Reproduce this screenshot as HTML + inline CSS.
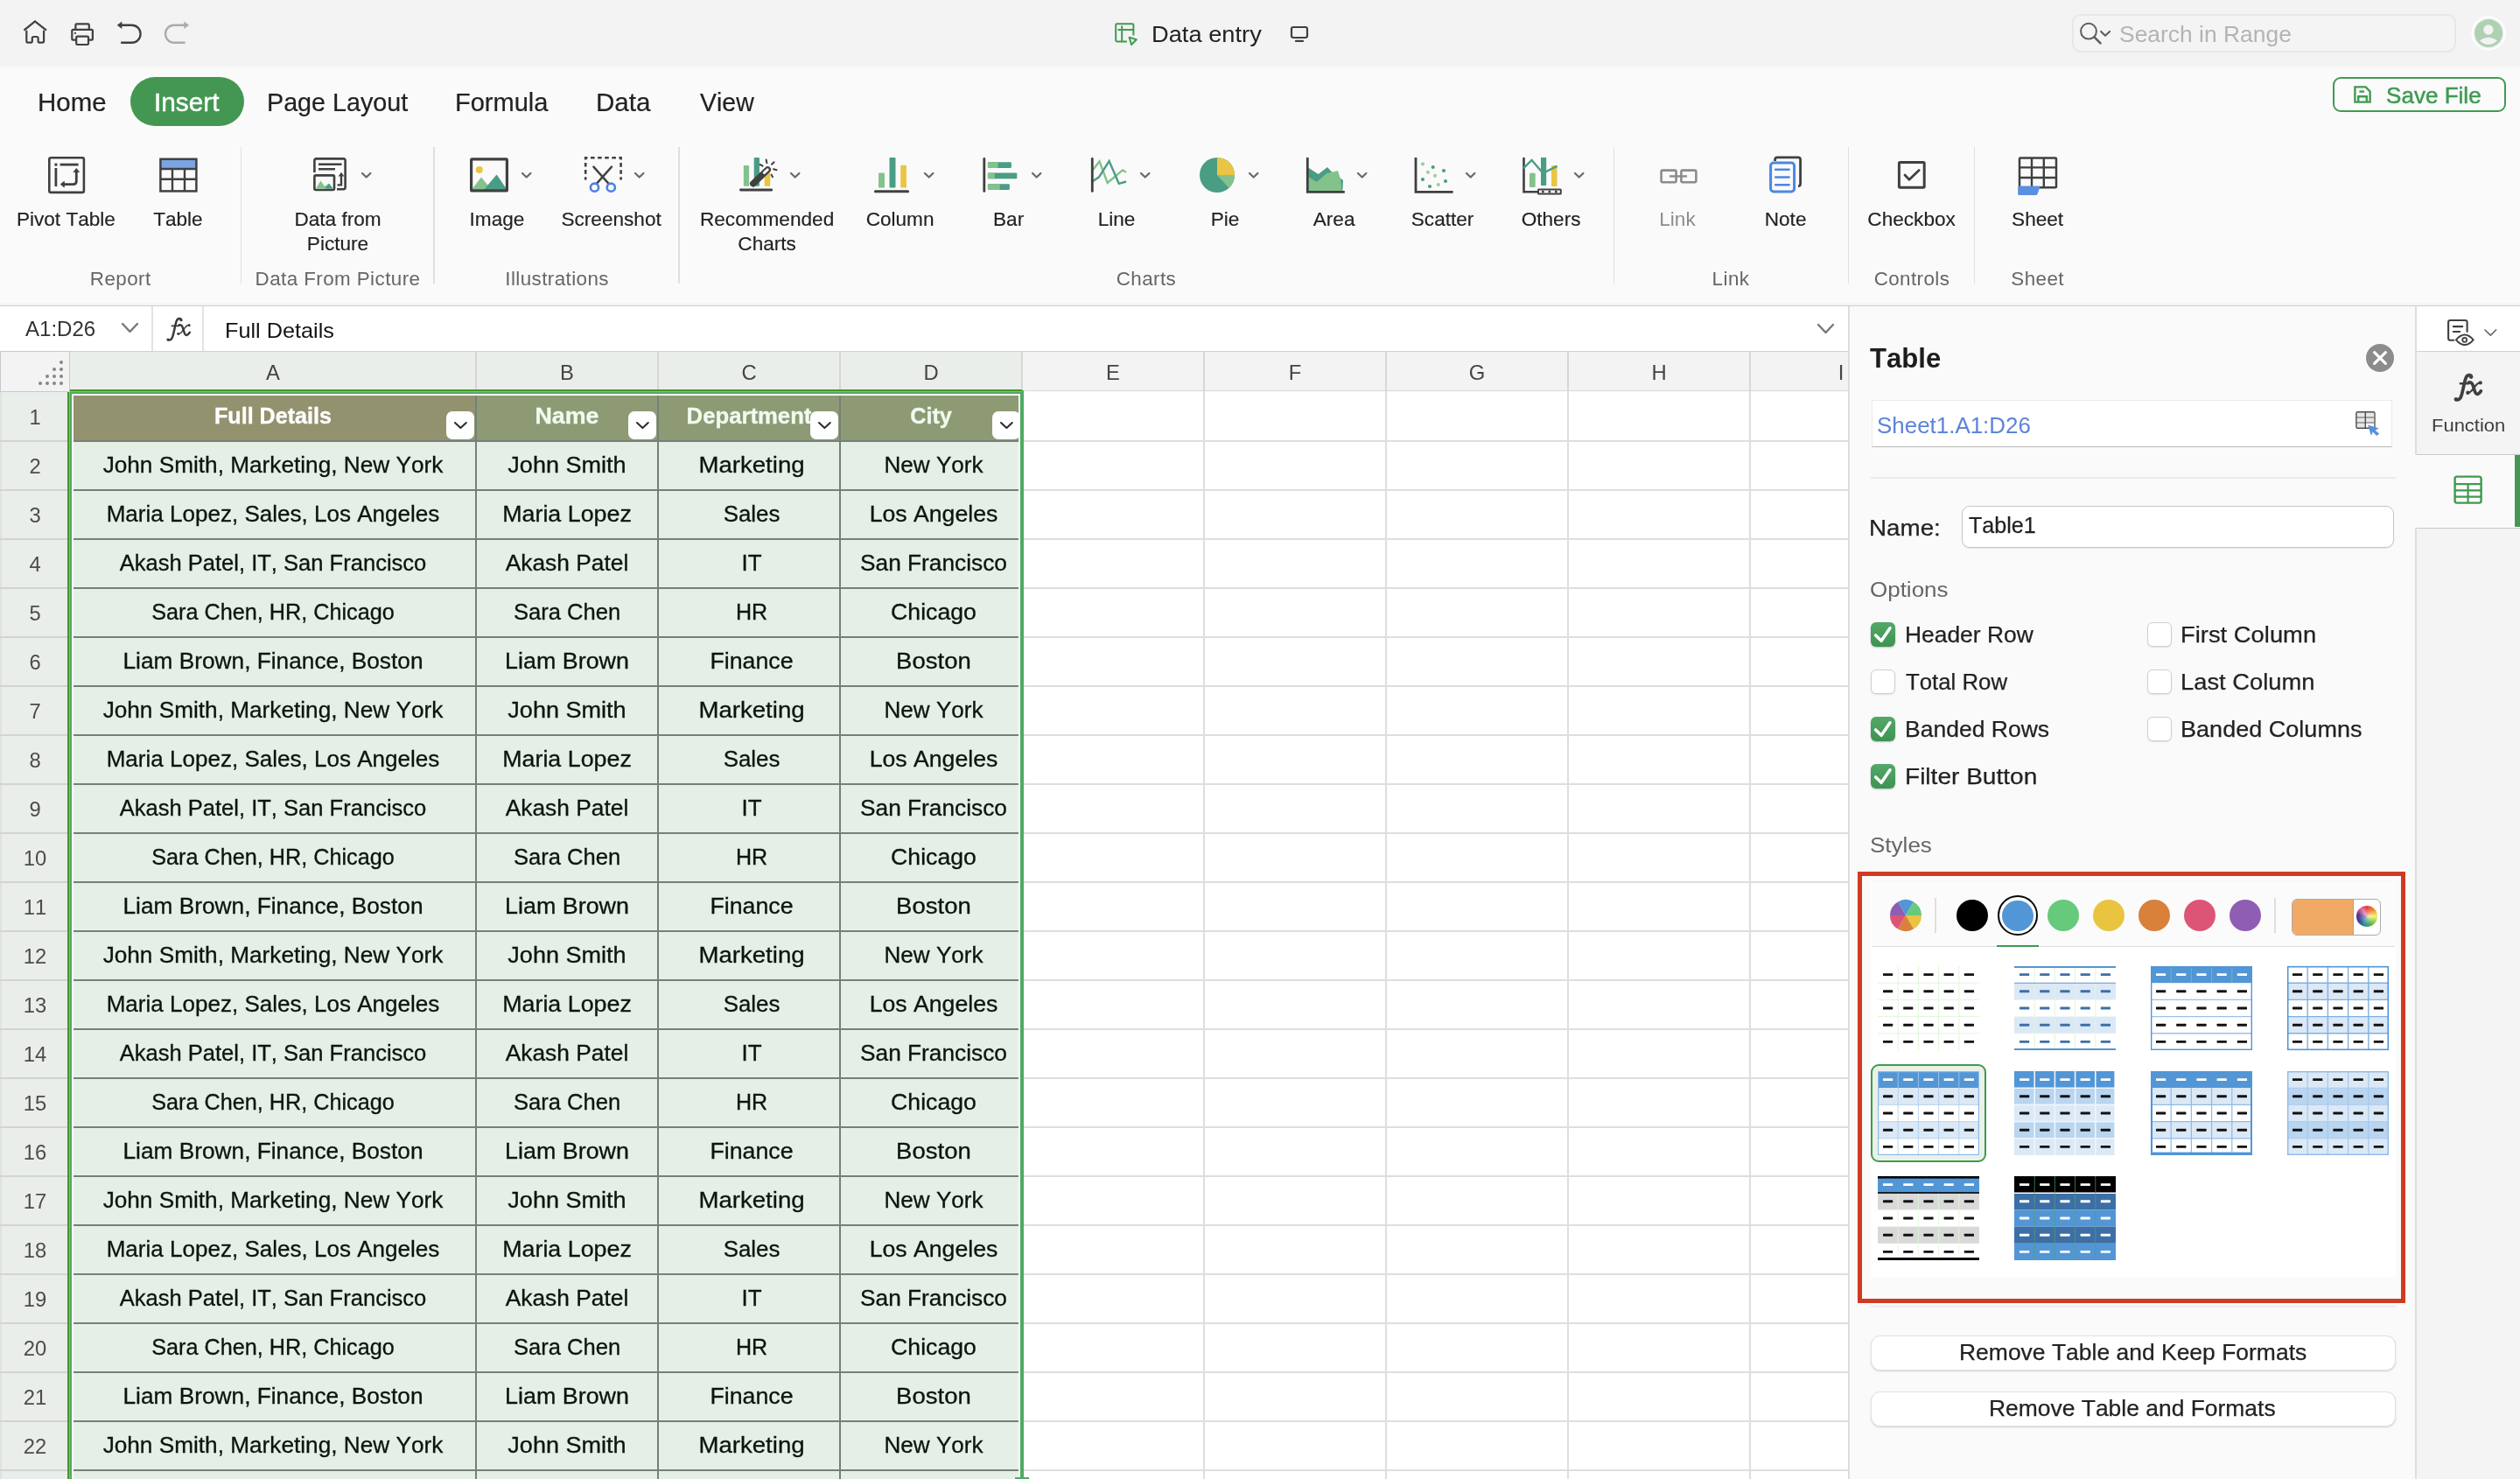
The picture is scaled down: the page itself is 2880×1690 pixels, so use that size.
<!DOCTYPE html>
<html><head><meta charset="utf-8"><title>Data entry</title>
<style>
html,body{margin:0;padding:0;background:#fff;}
body{width:2880px;height:1690px;overflow:hidden;font-family:"Liberation Sans",sans-serif;}
#app{position:relative;width:2880px;height:1690px;overflow:hidden;background:#fff;will-change:transform;}
.t{position:absolute;white-space:nowrap;line-height:1;font-kerning:none;}
svg{overflow:visible;}

</style></head>
<body>
<div id="app">
<div style="position:absolute;left:0px;top:0px;width:2880px;height:76px;background:#f3f3f3;"></div>
<svg style="position:absolute;left:25px;top:22px;" width="32" height="32" viewBox="0 0 32 32" fill="none"><path d="M2.4 12.7 L15 2.4 L28 12.7" stroke="#404040" stroke-width="2.3" stroke-linejoin="miter"/><path d="M5.3 13.6 V25 Q5.3 26.6 6.9 26.6 H10.3 Q11.8 26.6 11.8 25.1 V21.6 Q11.8 20 13.4 20 H17 Q18.6 20 18.6 21.6 V25.1 Q18.6 26.6 20.1 26.6 H23.5 Q25.1 26.6 25.1 25 V13.6" stroke="#404040" stroke-width="2.2" stroke-linecap="round" stroke-linejoin="round"/></svg>
<svg style="position:absolute;left:79px;top:24px;" width="32" height="32" viewBox="0 0 32 32" fill="none"><path d="M7.4 9.8 V4.6 Q7.4 3.3 8.7 3.3 H21.5 Q22.8 3.3 22.8 4.6 V9.8" stroke="#404040" stroke-width="2.2" stroke-linejoin="round"/><path d="M7.8 21.6 H4.7 Q3.3 21.6 3.3 20.2 V11.3 Q3.3 9.9 4.7 9.9 H25.5 Q26.9 9.9 26.9 11.3 V20.2 Q26.9 21.6 25.5 21.6 H22.4" stroke="#404040" stroke-width="2.2" stroke-linejoin="round"/><rect x="8.2" y="17.6" width="13.8" height="9.4" rx="1.2" stroke="#404040" stroke-width="2.2"/><circle cx="6.9" cy="13.9" r="1.15" fill="#404040"/></svg>
<svg style="position:absolute;left:132px;top:22px;" width="34" height="32" viewBox="0 0 34 32" fill="none"><path d="M6 6.75 H18.6 A10 10 0 0 1 18.6 26.75 H6.2" stroke="#404040" stroke-width="2.3"/><path d="M7.4 2.5 L1.8 6.75 L7.4 11 Z" fill="#404040"/></svg>
<svg style="position:absolute;left:186px;top:22px;" width="34" height="32" viewBox="0 0 34 32" fill="none"><path d="M25.8 6.75 H13 A10 10 0 0 0 13 26.75 H25.7" stroke="#ababab" stroke-width="2.3"/><path d="M24.4 2.5 L30 6.75 L24.4 11 Z" fill="#ababab"/></svg>
<svg style="position:absolute;left:1272px;top:24px;" width="30" height="30" viewBox="0 0 30 30" fill="none"><path d="M23.4 16.5 V4.6 Q23.4 3.2 22 3.2 H4.6 Q3.2 3.2 3.2 4.6 V22 Q3.2 23.4 4.6 23.4 H16" stroke="#3f9a50" stroke-width="2"/><path d="M10.2 5.5 V23.4 M5.5 10 H23.4" stroke="#3f9a50" stroke-width="2"/><path d="M18.6 18.6 L26.8 21.2 L21 27 Z" stroke="#3f9a50" stroke-width="2" stroke-linejoin="round"/></svg>
<div class="t" style="top:25.89px;font-size:26px;color:#222;left:1316.46px;transform:scaleX(1.0487);transform-origin:left center;">Data entry</div>
<svg style="position:absolute;left:1473px;top:28px;" width="24" height="22" viewBox="0 0 24 22" fill="none"><rect x="3" y="3" width="18" height="12" rx="2.2" stroke="#404040" stroke-width="2.2"/><path d="M8 18.9 H16" stroke="#404040" stroke-width="2.2" stroke-linecap="round"/></svg>
<div style="position:absolute;left:2368.3px;top:16.1px;width:439.2px;height:43.9px;box-sizing:border-box;background:#f4f4f4;border:2px solid #e7e7e7;border-radius:10px;"></div>
<svg style="position:absolute;left:2374px;top:24.2px;" width="42" height="30" viewBox="0 0 42 30" fill="none"><circle cx="13" cy="11.7" r="8.9" stroke="#5e5e5e" stroke-width="2"/><path d="M19.5 18.3 L26.5 25.3" stroke="#5e5e5e" stroke-width="2.6" stroke-linecap="round"/><path d="M27.1 11.9 L32 16.7 L37.1 11.9" stroke="#5e5e5e" stroke-width="2.1" stroke-linecap="round" stroke-linejoin="round"/></svg>
<div class="t" style="top:25.99px;font-size:26px;color:#b4b4b4;left:2421.80px;transform:scaleX(1.0165);transform-origin:left center;">Search in Range</div>
<svg style="position:absolute;left:2824px;top:18px;" width="40" height="40" viewBox="0 0 40 40" fill="none"><circle cx="20.1" cy="19.9" r="18.7" stroke="#fefefe" stroke-width="2"/><circle cx="20.1" cy="19.9" r="16" fill="#aed0b3"/><circle cx="19.9" cy="16" r="5.7" fill="#f3f3f3"/><path d="M10 28.5 Q20 21 29.9 28.5 Q20 37.7 10 28.5 Z" fill="#f3f3f3"/></svg>
<div style="position:absolute;left:0px;top:76px;width:2880px;height:272px;background:#fafafa;"></div>
<div style="position:absolute;left:0px;top:345px;width:2880px;height:4px;background:linear-gradient(#fafafa,#f1f1f1);"></div>
<div style="position:absolute;left:0px;top:348.8px;width:2880px;height:1.5px;background:#d0d0d0;"></div>
<div class="t" style="top:103.09px;font-size:28.6px;color:#222;left:42.68px;transform:scaleX(1.0306);transform-origin:left center;-webkit-text-stroke:0.2px #222;">Home</div>
<div style="position:absolute;left:149px;top:88px;width:130px;height:56px;background:#449752;border-radius:28px;"></div>
<div class="t" style="top:103.09px;font-size:28.6px;color:#fff;left:175.95px;transform:scaleX(1.0411);transform-origin:left center;-webkit-text-stroke:0.45px #fff;">Insert</div>
<div class="t" style="top:103.09px;font-size:28.6px;color:#222;left:304.64px;transform:scaleX(1.0041);transform-origin:left center;-webkit-text-stroke:0.2px #222;">Page Layout</div>
<div class="t" style="top:103.09px;font-size:28.6px;color:#222;left:519.62px;transform:scaleX(1.0142);transform-origin:left center;-webkit-text-stroke:0.2px #222;">Formula</div>
<div class="t" style="top:103.09px;font-size:28.6px;color:#222;left:680.58px;transform:scaleX(1.0333);transform-origin:left center;-webkit-text-stroke:0.2px #222;">Data</div>
<div class="t" style="top:103.09px;font-size:28.6px;color:#222;left:799.87px;transform:scaleX(0.9962);transform-origin:left center;-webkit-text-stroke:0.2px #222;">View</div>
<div style="position:absolute;left:2666px;top:88px;width:198px;height:40px;box-sizing:border-box;border:2.4px solid #3f9b52;border-radius:9px;background:#fbfbfb;"></div>
<svg style="position:absolute;left:2688px;top:96px;" width="24" height="24" viewBox="0 0 24 24" fill="none"><path d="M3.4 3.4 H15.6 L20.6 8.4 V20.6 H3.4 Z" stroke="#3f9b52" stroke-width="2.4" stroke-linejoin="miter"/><path d="M7.2 20.6 V14.2 H16.8 V20.6" stroke="#3f9b52" stroke-width="2.4"/><path d="M8.4 8.6 H14" stroke="#3f9b52" stroke-width="2.4"/></svg>
<div class="t" style="top:96.81px;font-size:25.5px;color:#3f9b52;left:2726.82px;transform:scaleX(1.0221);transform-origin:left center;-webkit-text-stroke:0.5px #3f9b52;">Save File</div>
<div style="position:absolute;left:274.7px;top:168px;width:1.6px;height:156px;background:#e0e0e0;"></div>
<div style="position:absolute;left:495.2px;top:168px;width:1.6px;height:156px;background:#e0e0e0;"></div>
<div style="position:absolute;left:775.2px;top:168px;width:1.6px;height:156px;background:#e0e0e0;"></div>
<div style="position:absolute;left:1843.8px;top:168px;width:1.6px;height:156px;background:#e0e0e0;"></div>
<div style="position:absolute;left:2111.7px;top:168px;width:1.6px;height:156px;background:#e0e0e0;"></div>
<div style="position:absolute;left:2255.6px;top:168px;width:1.6px;height:156px;background:#e0e0e0;"></div>
<svg style="position:absolute;left:50px;top:174px;" width="52" height="52" viewBox="0 0 52 52" fill="none"><rect x="6.3" y="6.3" width="39.6" height="39.6" rx="2" stroke="#404040" stroke-width="2.6"/><rect x="12.4" y="12.6" width="3" height="3" fill="#404040"/><path d="M18.6 14.1 H39.6" stroke="#404040" stroke-width="2.8"/><path d="M13.9 18 V39" stroke="#404040" stroke-width="2.8"/><path d="M37.3 21 V33 Q37.3 36.6 33.7 36.6 H23" stroke="#404040" stroke-width="2.8"/><path d="M34 22.6 L37.3 18.4 L40.6 22.6 Z" fill="#404040" stroke="#404040" stroke-width="0.8" stroke-linejoin="round"/><path d="M23.4 33.3 L19.2 36.6 L23.4 39.9 Z" fill="#404040" stroke="#404040" stroke-width="0.8" stroke-linejoin="round"/></svg>
<svg style="position:absolute;left:178px;top:176px;" width="52" height="48" viewBox="0 0 52 48" fill="none"><rect x="5.4" y="5.8" width="41" height="10.5" fill="#7ba4e2"/><rect x="5.4" y="5.8" width="41" height="36.6" stroke="#404040" stroke-width="2.5"/><path d="M5.4 17 H46.4 M5.4 28.7 H46.4 M19 17 V42.4 M33 17 V42.4" stroke="#404040" stroke-width="2.4"/></svg>
<svg style="position:absolute;left:354px;top:176px;" width="48" height="46" viewBox="0 0 48 46" fill="none"><path d="M5.4 21 V7.6 Q5.4 5.4 7.6 5.4 H38.4 Q40.6 5.4 40.6 7.6 V38 Q40.6 40.2 38.4 40.2 H31" stroke="#404040" stroke-width="2.6"/><path d="M10 11.7 H36.6 M10 17.2 H29" stroke="#404040" stroke-width="2.4"/><rect x="5.4" y="24.4" width="22.6" height="16.6" rx="1.5" fill="#fafafa" stroke="#404040" stroke-width="2.6"/><path d="M7 39.6 L12.5 30.5 L17 37 L21.5 34 L26.5 39.6 Z" fill="#84c28c"/><path d="M17 39.6 L22 33.6 L26.6 39.6 Z" fill="#4a9d85"/><path d="M36 24 V35.4 H31.6" stroke="#404040" stroke-width="2.4"/><path d="M32.6 25.6 L36 20.8 L39.4 25.6 Z" fill="#404040"/></svg>
<svg style="position:absolute;left:532px;top:176px;" width="54" height="48" viewBox="0 0 54 48" fill="none"><path d="M7 40.8 L18 26.6 L27.5 38 L35.6 24 L47 40.8 Z" fill="#84c28c"/><path d="M21 40.8 L35.6 23.6 L47.4 40.8 Z" fill="#4a9d85"/><circle cx="15.8" cy="17.9" r="4" fill="#eac545"/><rect x="6.6" y="5.9" width="40.8" height="36" rx="1" stroke="#404040" stroke-width="3.2"/></svg>
<svg style="position:absolute;left:664px;top:174px;" width="52" height="52" viewBox="0 0 52 52" fill="none"><path d="M5.2 31.6 V6.2 H45.6 V31.6" stroke="#404040" stroke-width="2.6" stroke-dasharray="4.6 3.5" stroke-dashoffset="1.2"/><path d="M14.4 16.6 L31.4 35.6 M35 16.6 L18 35.6" stroke="#404040" stroke-width="2.4" stroke-linecap="round"/><circle cx="15.5" cy="40.2" r="4.6" fill="#fafafa" stroke="#4b82e0" stroke-width="2.6"/><circle cx="34.3" cy="40.2" r="4.6" fill="#fafafa" stroke="#4b82e0" stroke-width="2.6"/></svg>
<svg style="position:absolute;left:840px;top:174px;" width="60" height="52" viewBox="0 0 60 52" fill="none"><rect x="9.8" y="15" width="6.3" height="23.8" rx="1" fill="#84c28c"/><rect x="21.7" y="6" width="6.3" height="32.8" rx="1" fill="#4a9d85"/><rect x="33.6" y="22.7" width="6.7" height="16.1" rx="1" fill="#eac545"/><path d="M6.4 43 H41.8" stroke="#404040" stroke-width="2.8" stroke-linecap="round"/><path d="M20.7 35.8 L37.3 19.8" stroke="#404040" stroke-width="7.4" stroke-linecap="round"/><path d="M33.4 23.4 L37.2 19.8" stroke="#fafafa" stroke-width="3" stroke-linecap="round"/><path d="M35.6 8.5 L36.4 12.2 M44.6 11.2 L42 13.8 M47.6 20.2 L44 19.2 M41.6 25.6 L43 28.2 M28.6 14 L31.6 15.6" stroke="#404040" stroke-width="2" stroke-linecap="round"/></svg>
<svg style="position:absolute;left:994px;top:174px;" width="52" height="52" viewBox="0 0 52 52" fill="none"><rect x="10" y="23.5" width="7" height="17" rx="1.2" fill="#84c28c"/><rect x="22.5" y="6" width="7" height="34.5" rx="1.2" fill="#4a9d85"/><rect x="35.2" y="14.8" width="6.8" height="25.7" rx="1.2" fill="#eac545"/><path d="M6.4 44.7 H43.6" stroke="#404040" stroke-width="3" stroke-linecap="round"/></svg>
<svg style="position:absolute;left:1118px;top:174px;" width="52" height="52" viewBox="0 0 52 52" fill="none"><path d="M6.8 7.4 V44.4" stroke="#404040" stroke-width="2.8" stroke-linecap="round"/><rect x="10.9" y="11.3" width="27" height="6.6" rx="1.3" fill="#4a9d85"/><rect x="10.9" y="11.3" width="11.7" height="6.6" rx="1" fill="#84c28c"/><rect x="10.9" y="23.5" width="33.4" height="6.7" rx="1.3" fill="#4a9d85"/><rect x="10.9" y="23.5" width="7.9" height="6.7" rx="1" fill="#84c28c"/><rect x="10.9" y="36.2" width="25" height="6.7" rx="1.3" fill="#4a9d85"/><rect x="10.9" y="36.2" width="13.8" height="6.7" rx="1" fill="#84c28c"/></svg>
<svg style="position:absolute;left:1242px;top:174px;" width="52" height="52" viewBox="0 0 52 52" fill="none"><path d="M6.3 21 L14.5 10.4 L23.7 35 L41 20.4 L45 22.7" stroke="#84c28c" stroke-width="2.4" stroke-linejoin="miter"/><path d="M6.3 33.5 L14 28.3 L25.6 10 L36.7 35.8 L45 33.5" stroke="#4a9d85" stroke-width="2.4" stroke-linejoin="miter"/><path d="M6.3 7.4 V44.4" stroke="#404040" stroke-width="2.8" stroke-linecap="round"/></svg>
<svg style="position:absolute;left:1365px;top:174px;" width="52" height="52" viewBox="0 0 52 52" fill="none"><circle cx="26" cy="26" r="20" fill="#4a9d85"/><path d="M26 26 L26.00 6.00 A20 20 0 0 1 46.00 26.00 Z" fill="#eac545"/><path d="M26 26 L46.00 26.00 A20 20 0 0 1 39.38 40.86 Z" fill="#84c28c"/></svg>
<svg style="position:absolute;left:1488px;top:174px;" width="56" height="52" viewBox="0 0 56 52" fill="none"><path d="M7 17.5 L18.7 25 L29 17 L34 22.4 L47 32 L46.3 44 H7 Z" fill="#4a9d85"/><path d="M7 28 L16.8 34 L28 24.3 L41 21 L44.4 32 L45.3 44 H7 Z" fill="#84c28c"/><path d="M6.3 6 V45.3 H48.8" stroke="#404040" stroke-width="2.8" stroke-linejoin="miter" stroke-linecap="butt"/></svg>
<svg style="position:absolute;left:1612px;top:174px;" width="56" height="52" viewBox="0 0 56 52" fill="none"><circle cx="14.0" cy="13.3" r="2.1" fill="#9bd09f"/><circle cx="20.0" cy="22.8" r="2.1" fill="#9bd09f"/><circle cx="28.0" cy="26.8" r="2.1" fill="#9bd09f"/><circle cx="31.8" cy="37.0" r="2.1" fill="#9bd09f"/><circle cx="25.7" cy="17.0" r="2.1" fill="#4a9d85"/><circle cx="38.0" cy="21.0" r="2.1" fill="#4a9d85"/><circle cx="14.0" cy="31.0" r="2.1" fill="#4a9d85"/><circle cx="40.0" cy="33.0" r="2.1" fill="#4a9d85"/><circle cx="22.0" cy="39.0" r="2.1" fill="#4a9d85"/><path d="M6 6 V45.3 H48.6" stroke="#404040" stroke-width="2.8"/></svg>
<svg style="position:absolute;left:1736px;top:174px;" width="56" height="54" viewBox="0 0 56 54" fill="none"><path d="M5.5 6 V45.3 H22" stroke="#404040" stroke-width="2.6"/><rect x="12" y="23.8" width="6.7" height="16.2" rx="1" fill="#84c28c"/><rect x="25" y="6" width="6.2" height="32" fill="#4a9d85"/><rect x="37" y="15" width="6.6" height="24" rx="1" fill="#eac545"/><path d="M5 18.4 L14.5 9 L27.4 23.8 L43.6 15.8" stroke="#4a9d85" stroke-width="2.4"/><rect x="22" y="42.5" width="25.8" height="5" rx="0.6" fill="#fff" stroke="#404040" stroke-width="2"/><circle cx="27.3" cy="45" r="1.5" fill="#404040"/><circle cx="34.9" cy="45" r="1.5" fill="#404040"/><circle cx="42.3" cy="45" r="1.5" fill="#404040"/></svg>
<svg style="position:absolute;left:1892px;top:186px;" width="52" height="30" viewBox="0 0 52 30" fill="none"><rect x="6.6" y="8.6" width="17" height="13.6" rx="1.6" stroke="#8c8c8c" stroke-width="2.6"/><rect x="29.4" y="8.6" width="17" height="13.6" rx="1.6" stroke="#8c8c8c" stroke-width="2.6"/><path d="M16 15.4 H36" stroke="#8c8c8c" stroke-width="2.4"/></svg>
<svg style="position:absolute;left:2016px;top:172px;" width="48" height="54" viewBox="0 0 48 54" fill="none"><path d="M12.6 12 V10.4 Q12.6 7.8 15.2 7.8 H39 Q41.6 7.8 41.6 10.4 V38 Q41.6 40.6 39 40.6" stroke="#404040" stroke-width="2.8"/><rect x="7.6" y="14" width="27" height="33" rx="3.4" fill="#fafafa" stroke="#4b87e2" stroke-width="3"/><path d="M13.2 21.7 H28.6 M13.2 30.5 H28.6 M13.2 39.3 H28.6" stroke="#4b87e2" stroke-width="2.6" stroke-linecap="round"/></svg>
<svg style="position:absolute;left:2164px;top:178px;" width="42" height="42" viewBox="0 0 42 42" fill="none"><rect x="6.4" y="7.4" width="28.8" height="28.8" rx="1.2" stroke="#404040" stroke-width="3"/><path d="M13 22 L18 27.2 L29.2 16.6" stroke="#404040" stroke-width="2.8" stroke-linecap="round" stroke-linejoin="round"/></svg>
<svg style="position:absolute;left:2300px;top:174px;" width="58" height="54" viewBox="0 0 58 54" fill="none"><rect x="8" y="6.6" width="42" height="33.6" rx="1" stroke="#404040" stroke-width="2.5"/><path d="M22 6.6 V40.2 M35.8 6.6 V40.2 M8 17.4 H50 M8 29 H50" stroke="#404040" stroke-width="2.4"/><path d="M6.2 40.2 Q6.2 38.6 7.8 38.6 H31.8 L28.6 47.4 Q28 49 26.4 49 H7.8 Q6.2 49 6.2 47.4 Z" fill="#5b8fe0"/></svg>
<svg style="position:absolute;left:412.2px;top:195.9px;" width="13.4" height="8.5" viewBox="0 0 13.4 8.5" fill="none"><path d="M2 2 L6.7 6.5 L11.4 2" stroke="#6a6a6a" stroke-width="2.3" stroke-linecap="round" stroke-linejoin="round"/></svg>
<svg style="position:absolute;left:594.6px;top:195.9px;" width="13.4" height="8.5" viewBox="0 0 13.4 8.5" fill="none"><path d="M2 2 L6.7 6.5 L11.4 2" stroke="#6a6a6a" stroke-width="2.3" stroke-linecap="round" stroke-linejoin="round"/></svg>
<svg style="position:absolute;left:724.2px;top:195.9px;" width="13.4" height="8.5" viewBox="0 0 13.4 8.5" fill="none"><path d="M2 2 L6.7 6.5 L11.4 2" stroke="#6a6a6a" stroke-width="2.3" stroke-linecap="round" stroke-linejoin="round"/></svg>
<svg style="position:absolute;left:902.2px;top:195.9px;" width="13.4" height="8.5" viewBox="0 0 13.4 8.5" fill="none"><path d="M2 2 L6.7 6.5 L11.4 2" stroke="#6a6a6a" stroke-width="2.3" stroke-linecap="round" stroke-linejoin="round"/></svg>
<svg style="position:absolute;left:1054.6000000000001px;top:195.9px;" width="13.4" height="8.5" viewBox="0 0 13.4 8.5" fill="none"><path d="M2 2 L6.7 6.5 L11.4 2" stroke="#6a6a6a" stroke-width="2.3" stroke-linecap="round" stroke-linejoin="round"/></svg>
<svg style="position:absolute;left:1178.4px;top:195.9px;" width="13.4" height="8.5" viewBox="0 0 13.4 8.5" fill="none"><path d="M2 2 L6.7 6.5 L11.4 2" stroke="#6a6a6a" stroke-width="2.3" stroke-linecap="round" stroke-linejoin="round"/></svg>
<svg style="position:absolute;left:1302.2px;top:195.9px;" width="13.4" height="8.5" viewBox="0 0 13.4 8.5" fill="none"><path d="M2 2 L6.7 6.5 L11.4 2" stroke="#6a6a6a" stroke-width="2.3" stroke-linecap="round" stroke-linejoin="round"/></svg>
<svg style="position:absolute;left:1426.2px;top:195.9px;" width="13.4" height="8.5" viewBox="0 0 13.4 8.5" fill="none"><path d="M2 2 L6.7 6.5 L11.4 2" stroke="#6a6a6a" stroke-width="2.3" stroke-linecap="round" stroke-linejoin="round"/></svg>
<svg style="position:absolute;left:1550.2px;top:195.9px;" width="13.4" height="8.5" viewBox="0 0 13.4 8.5" fill="none"><path d="M2 2 L6.7 6.5 L11.4 2" stroke="#6a6a6a" stroke-width="2.3" stroke-linecap="round" stroke-linejoin="round"/></svg>
<svg style="position:absolute;left:1674.2px;top:195.9px;" width="13.4" height="8.5" viewBox="0 0 13.4 8.5" fill="none"><path d="M2 2 L6.7 6.5 L11.4 2" stroke="#6a6a6a" stroke-width="2.3" stroke-linecap="round" stroke-linejoin="round"/></svg>
<svg style="position:absolute;left:1798.2px;top:195.9px;" width="13.4" height="8.5" viewBox="0 0 13.4 8.5" fill="none"><path d="M2 2 L6.7 6.5 L11.4 2" stroke="#6a6a6a" stroke-width="2.3" stroke-linecap="round" stroke-linejoin="round"/></svg>
<div class="t" style="top:239.67px;font-size:22.6px;color:#222;left:-524.60px;width:1200px;text-align:center;-webkit-text-stroke:0.15px #222;">Pivot Table</div>
<div class="t" style="top:239.67px;font-size:22.6px;color:#222;left:-396.60px;width:1200px;text-align:center;-webkit-text-stroke:0.15px #222;">Table</div>
<div class="t" style="top:239.67px;font-size:22.6px;color:#222;left:-214.00px;width:1200px;text-align:center;-webkit-text-stroke:0.15px #222;">Data from</div>
<div class="t" style="top:239.67px;font-size:22.6px;color:#222;left:-32.00px;width:1200px;text-align:center;-webkit-text-stroke:0.15px #222;">Image</div>
<div class="t" style="top:239.67px;font-size:22.6px;color:#222;left:98.60px;width:1200px;text-align:center;-webkit-text-stroke:0.15px #222;">Screenshot</div>
<div class="t" style="top:239.67px;font-size:22.6px;color:#222;left:276.60px;width:1200px;text-align:center;-webkit-text-stroke:0.15px #222;">Recommended</div>
<div class="t" style="top:239.67px;font-size:22.6px;color:#222;left:428.60px;width:1200px;text-align:center;-webkit-text-stroke:0.15px #222;">Column</div>
<div class="t" style="top:239.67px;font-size:22.6px;color:#222;left:552.60px;width:1200px;text-align:center;-webkit-text-stroke:0.15px #222;">Bar</div>
<div class="t" style="top:239.67px;font-size:22.6px;color:#222;left:676.00px;width:1200px;text-align:center;-webkit-text-stroke:0.15px #222;">Line</div>
<div class="t" style="top:239.67px;font-size:22.6px;color:#222;left:800.00px;width:1200px;text-align:center;-webkit-text-stroke:0.15px #222;">Pie</div>
<div class="t" style="top:239.67px;font-size:22.6px;color:#222;left:924.60px;width:1200px;text-align:center;-webkit-text-stroke:0.15px #222;">Area</div>
<div class="t" style="top:239.67px;font-size:22.6px;color:#222;left:1048.60px;width:1200px;text-align:center;-webkit-text-stroke:0.15px #222;">Scatter</div>
<div class="t" style="top:239.67px;font-size:22.6px;color:#222;left:1172.60px;width:1200px;text-align:center;-webkit-text-stroke:0.15px #222;">Others</div>
<div class="t" style="top:239.67px;font-size:22.6px;color:#222;left:1440.60px;width:1200px;text-align:center;-webkit-text-stroke:0.15px #222;">Note</div>
<div class="t" style="top:239.67px;font-size:22.6px;color:#222;left:1584.60px;width:1200px;text-align:center;-webkit-text-stroke:0.15px #222;">Checkbox</div>
<div class="t" style="top:239.67px;font-size:22.6px;color:#222;left:1728.60px;width:1200px;text-align:center;-webkit-text-stroke:0.15px #222;">Sheet</div>
<div class="t" style="top:239.67px;font-size:22.6px;color:#8c8c8c;left:1317.00px;width:1200px;text-align:center;">Link</div>
<div class="t" style="top:268.07px;font-size:22.6px;color:#222;left:-214.00px;width:1200px;text-align:center;-webkit-text-stroke:0.15px #222;">Picture</div>
<div class="t" style="top:268.07px;font-size:22.6px;color:#222;left:276.60px;width:1200px;text-align:center;-webkit-text-stroke:0.15px #222;">Charts</div>
<div class="t" style="top:307.84px;font-size:22.4px;color:#666;letter-spacing:0.42px;left:-462.30px;width:1200px;text-align:center;">Report</div>
<div class="t" style="top:307.84px;font-size:22.4px;color:#666;letter-spacing:0.42px;left:-214.00px;width:1200px;text-align:center;">Data From Picture</div>
<div class="t" style="top:307.84px;font-size:22.4px;color:#666;letter-spacing:0.42px;left:36.60px;width:1200px;text-align:center;">Illustrations</div>
<div class="t" style="top:307.84px;font-size:22.4px;color:#666;letter-spacing:0.42px;left:710.00px;width:1200px;text-align:center;">Charts</div>
<div class="t" style="top:307.84px;font-size:22.4px;color:#666;letter-spacing:0.42px;left:1378.00px;width:1200px;text-align:center;">Link</div>
<div class="t" style="top:307.84px;font-size:22.4px;color:#666;letter-spacing:0.42px;left:1585.00px;width:1200px;text-align:center;">Controls</div>
<div class="t" style="top:307.84px;font-size:22.4px;color:#666;letter-spacing:0.42px;left:1728.60px;width:1200px;text-align:center;">Sheet</div>
<div style="position:absolute;left:0px;top:350px;width:2113px;height:52px;background:#fff;"></div>
<div class="t" style="top:363.68px;font-size:24px;color:#333;left:29.45px;transform:scaleX(1.0019);transform-origin:left center;">A1:D26</div>
<svg style="position:absolute;left:138px;top:368px;" width="21" height="13" viewBox="0 0 21 13" fill="none"><path d="M2 2 L10.5 11 L19 2" stroke="#777" stroke-width="2.4" stroke-linecap="round" stroke-linejoin="round"/></svg>
<div style="position:absolute;left:173px;top:350px;width:2px;height:52px;background:#e3e3e3;"></div>
<div style="position:absolute;left:231px;top:350px;width:2px;height:52px;background:#e3e3e3;"></div>
<svg style="position:absolute;left:186px;top:360px;" width="36.00" height="34.00" viewBox="0 0 36 34" fill="none"><path d="M21.2 5.9 C21 3.6 17.4 3.2 15.9 6.6 C14.5 9.8 13.5 16.4 11.7 23.2 C10.5 27.6 8.8 29.4 5.9 28.3" stroke="#3a3a3a" stroke-width="2.5" stroke-linecap="round"/><circle cx="20.9" cy="5.7" r="1.5" fill="#3a3a3a"/><circle cx="6" cy="28.1" r="1.5" fill="#3a3a3a"/><path d="M10.4 12.4 H18.4" stroke="#3a3a3a" stroke-width="1.7" stroke-linecap="round"/><path d="M18.6 11.4 C21.4 10.4 22.6 13 23.6 16.6 C24.6 20.2 25.4 23.2 27.2 22.9 C28.6 22.7 29.8 21.4 30.8 19.8" stroke="#3a3a3a" stroke-width="2.5" stroke-linecap="round"/><path d="M30 11.6 C27.6 11.2 25.8 13.8 23.6 16.8 C21.4 19.8 19.8 22.2 17.8 21.6" stroke="#3a3a3a" stroke-width="1.5" stroke-linecap="round"/><circle cx="30.2" cy="11.7" r="1.45" fill="#3a3a3a"/><circle cx="17.7" cy="21.5" r="1.45" fill="#3a3a3a"/></svg>
<div class="t" style="top:366.72px;font-size:23.6px;color:#111;left:256.93px;transform:scaleX(1.0708);transform-origin:left center;">Full Details</div>
<svg style="position:absolute;left:2076px;top:369px;" width="21" height="13" viewBox="0 0 21 13" fill="none"><path d="M2 2 L10.5 11 L19 2" stroke="#777" stroke-width="2.4" stroke-linecap="round" stroke-linejoin="round"/></svg>
<div style="position:absolute;left:0px;top:400.7px;width:2113px;height:1.5px;background:#d0d0d0;"></div>
<div style="position:absolute;left:0px;top:402.2px;width:2113px;height:44px;background:#f3f3f3;"></div>
<div style="position:absolute;left:80px;top:402.2px;width:1088px;height:44px;background:#eaeeea;"></div>
<div class="t" style="top:414.05px;font-size:23.8px;color:#444;left:-288.00px;width:1200px;text-align:center;">A</div>
<div class="t" style="top:414.05px;font-size:23.8px;color:#444;left:48.00px;width:1200px;text-align:center;">B</div>
<div class="t" style="top:414.05px;font-size:23.8px;color:#444;left:256.00px;width:1200px;text-align:center;">C</div>
<div class="t" style="top:414.05px;font-size:23.8px;color:#444;left:464.00px;width:1200px;text-align:center;">D</div>
<div class="t" style="top:414.05px;font-size:23.8px;color:#444;left:672.00px;width:1200px;text-align:center;">E</div>
<div class="t" style="top:414.05px;font-size:23.8px;color:#444;left:880.00px;width:1200px;text-align:center;">F</div>
<div class="t" style="top:414.05px;font-size:23.8px;color:#444;left:1088.00px;width:1200px;text-align:center;">G</div>
<div class="t" style="top:414.05px;font-size:23.8px;color:#444;left:1296.00px;width:1200px;text-align:center;">H</div>
<div class="t" style="top:414.05px;font-size:23.8px;color:#444;left:1504.00px;width:1200px;text-align:center;">I</div>
<div style="position:absolute;left:543px;top:402.2px;width:2px;height:44px;background:#d6d6d6;"></div>
<div style="position:absolute;left:751px;top:402.2px;width:2px;height:44px;background:#d6d6d6;"></div>
<div style="position:absolute;left:959px;top:402.2px;width:2px;height:44px;background:#d6d6d6;"></div>
<div style="position:absolute;left:1167px;top:402.2px;width:2px;height:44px;background:#d6d6d6;"></div>
<div style="position:absolute;left:1375px;top:402.2px;width:2px;height:44px;background:#d6d6d6;"></div>
<div style="position:absolute;left:1583px;top:402.2px;width:2px;height:44px;background:#d6d6d6;"></div>
<div style="position:absolute;left:1791px;top:402.2px;width:2px;height:44px;background:#d6d6d6;"></div>
<div style="position:absolute;left:1999px;top:402.2px;width:2px;height:44px;background:#d6d6d6;"></div>
<div style="position:absolute;left:1168px;top:446.4px;width:945px;height:1.6px;background:#d6d6d6;"></div>
<div style="position:absolute;left:0px;top:447px;width:2113px;height:1243px;background:#fff;"></div>
<div style="position:absolute;left:0px;top:447px;width:80px;height:1243px;background:#eaeeea;"></div>
<div style="position:absolute;left:0px;top:447px;width:2px;height:1243px;background:#dfe2df;"></div>
<div class="t" style="top:464.85px;font-size:23.8px;color:#4c4c4c;left:-560.00px;width:1200px;text-align:center;">1</div>
<div style="position:absolute;left:0px;top:502.7px;width:78px;height:2px;background:#d2d4d2;"></div>
<div class="t" style="top:520.85px;font-size:23.8px;color:#4c4c4c;left:-560.00px;width:1200px;text-align:center;">2</div>
<div style="position:absolute;left:0px;top:558.7px;width:78px;height:2px;background:#d2d4d2;"></div>
<div class="t" style="top:576.85px;font-size:23.8px;color:#4c4c4c;left:-560.00px;width:1200px;text-align:center;">3</div>
<div style="position:absolute;left:0px;top:614.7px;width:78px;height:2px;background:#d2d4d2;"></div>
<div class="t" style="top:632.85px;font-size:23.8px;color:#4c4c4c;left:-560.00px;width:1200px;text-align:center;">4</div>
<div style="position:absolute;left:0px;top:670.7px;width:78px;height:2px;background:#d2d4d2;"></div>
<div class="t" style="top:688.85px;font-size:23.8px;color:#4c4c4c;left:-560.00px;width:1200px;text-align:center;">5</div>
<div style="position:absolute;left:0px;top:726.7px;width:78px;height:2px;background:#d2d4d2;"></div>
<div class="t" style="top:744.85px;font-size:23.8px;color:#4c4c4c;left:-560.00px;width:1200px;text-align:center;">6</div>
<div style="position:absolute;left:0px;top:782.7px;width:78px;height:2px;background:#d2d4d2;"></div>
<div class="t" style="top:800.85px;font-size:23.8px;color:#4c4c4c;left:-560.00px;width:1200px;text-align:center;">7</div>
<div style="position:absolute;left:0px;top:838.7px;width:78px;height:2px;background:#d2d4d2;"></div>
<div class="t" style="top:856.85px;font-size:23.8px;color:#4c4c4c;left:-560.00px;width:1200px;text-align:center;">8</div>
<div style="position:absolute;left:0px;top:894.7px;width:78px;height:2px;background:#d2d4d2;"></div>
<div class="t" style="top:912.85px;font-size:23.8px;color:#4c4c4c;left:-560.00px;width:1200px;text-align:center;">9</div>
<div style="position:absolute;left:0px;top:950.7px;width:78px;height:2px;background:#d2d4d2;"></div>
<div class="t" style="top:968.85px;font-size:23.8px;color:#4c4c4c;left:-560.00px;width:1200px;text-align:center;">10</div>
<div style="position:absolute;left:0px;top:1006.7px;width:78px;height:2px;background:#d2d4d2;"></div>
<div class="t" style="top:1024.85px;font-size:23.8px;color:#4c4c4c;left:-560.00px;width:1200px;text-align:center;">11</div>
<div style="position:absolute;left:0px;top:1062.7px;width:78px;height:2px;background:#d2d4d2;"></div>
<div class="t" style="top:1080.85px;font-size:23.8px;color:#4c4c4c;left:-560.00px;width:1200px;text-align:center;">12</div>
<div style="position:absolute;left:0px;top:1118.7px;width:78px;height:2px;background:#d2d4d2;"></div>
<div class="t" style="top:1136.85px;font-size:23.8px;color:#4c4c4c;left:-560.00px;width:1200px;text-align:center;">13</div>
<div style="position:absolute;left:0px;top:1174.7px;width:78px;height:2px;background:#d2d4d2;"></div>
<div class="t" style="top:1192.85px;font-size:23.8px;color:#4c4c4c;left:-560.00px;width:1200px;text-align:center;">14</div>
<div style="position:absolute;left:0px;top:1230.7px;width:78px;height:2px;background:#d2d4d2;"></div>
<div class="t" style="top:1248.85px;font-size:23.8px;color:#4c4c4c;left:-560.00px;width:1200px;text-align:center;">15</div>
<div style="position:absolute;left:0px;top:1286.7px;width:78px;height:2px;background:#d2d4d2;"></div>
<div class="t" style="top:1304.85px;font-size:23.8px;color:#4c4c4c;left:-560.00px;width:1200px;text-align:center;">16</div>
<div style="position:absolute;left:0px;top:1342.7px;width:78px;height:2px;background:#d2d4d2;"></div>
<div class="t" style="top:1360.85px;font-size:23.8px;color:#4c4c4c;left:-560.00px;width:1200px;text-align:center;">17</div>
<div style="position:absolute;left:0px;top:1398.7px;width:78px;height:2px;background:#d2d4d2;"></div>
<div class="t" style="top:1416.85px;font-size:23.8px;color:#4c4c4c;left:-560.00px;width:1200px;text-align:center;">18</div>
<div style="position:absolute;left:0px;top:1454.7px;width:78px;height:2px;background:#d2d4d2;"></div>
<div class="t" style="top:1472.85px;font-size:23.8px;color:#4c4c4c;left:-560.00px;width:1200px;text-align:center;">19</div>
<div style="position:absolute;left:0px;top:1510.7px;width:78px;height:2px;background:#d2d4d2;"></div>
<div class="t" style="top:1528.85px;font-size:23.8px;color:#4c4c4c;left:-560.00px;width:1200px;text-align:center;">20</div>
<div style="position:absolute;left:0px;top:1566.7px;width:78px;height:2px;background:#d2d4d2;"></div>
<div class="t" style="top:1584.85px;font-size:23.8px;color:#4c4c4c;left:-560.00px;width:1200px;text-align:center;">21</div>
<div style="position:absolute;left:0px;top:1622.7px;width:78px;height:2px;background:#d2d4d2;"></div>
<div class="t" style="top:1640.85px;font-size:23.8px;color:#4c4c4c;left:-560.00px;width:1200px;text-align:center;">22</div>
<div style="position:absolute;left:0px;top:1678.7px;width:78px;height:2px;background:#d2d4d2;"></div>
<div class="t" style="top:1696.85px;font-size:23.8px;color:#4c4c4c;left:-560.00px;width:1200px;text-align:center;">23</div>
<div style="position:absolute;left:0px;top:1734.7px;width:78px;height:2px;background:#d2d4d2;"></div>
<div style="position:absolute;left:1170px;top:502.7px;width:943px;height:2px;background:#dedede;"></div>
<div style="position:absolute;left:1170px;top:558.7px;width:943px;height:2px;background:#dedede;"></div>
<div style="position:absolute;left:1170px;top:614.7px;width:943px;height:2px;background:#dedede;"></div>
<div style="position:absolute;left:1170px;top:670.7px;width:943px;height:2px;background:#dedede;"></div>
<div style="position:absolute;left:1170px;top:726.7px;width:943px;height:2px;background:#dedede;"></div>
<div style="position:absolute;left:1170px;top:782.7px;width:943px;height:2px;background:#dedede;"></div>
<div style="position:absolute;left:1170px;top:838.7px;width:943px;height:2px;background:#dedede;"></div>
<div style="position:absolute;left:1170px;top:894.7px;width:943px;height:2px;background:#dedede;"></div>
<div style="position:absolute;left:1170px;top:950.7px;width:943px;height:2px;background:#dedede;"></div>
<div style="position:absolute;left:1170px;top:1006.7px;width:943px;height:2px;background:#dedede;"></div>
<div style="position:absolute;left:1170px;top:1062.7px;width:943px;height:2px;background:#dedede;"></div>
<div style="position:absolute;left:1170px;top:1118.7px;width:943px;height:2px;background:#dedede;"></div>
<div style="position:absolute;left:1170px;top:1174.7px;width:943px;height:2px;background:#dedede;"></div>
<div style="position:absolute;left:1170px;top:1230.7px;width:943px;height:2px;background:#dedede;"></div>
<div style="position:absolute;left:1170px;top:1286.7px;width:943px;height:2px;background:#dedede;"></div>
<div style="position:absolute;left:1170px;top:1342.7px;width:943px;height:2px;background:#dedede;"></div>
<div style="position:absolute;left:1170px;top:1398.7px;width:943px;height:2px;background:#dedede;"></div>
<div style="position:absolute;left:1170px;top:1454.7px;width:943px;height:2px;background:#dedede;"></div>
<div style="position:absolute;left:1170px;top:1510.7px;width:943px;height:2px;background:#dedede;"></div>
<div style="position:absolute;left:1170px;top:1566.7px;width:943px;height:2px;background:#dedede;"></div>
<div style="position:absolute;left:1170px;top:1622.7px;width:943px;height:2px;background:#dedede;"></div>
<div style="position:absolute;left:1170px;top:1678.7px;width:943px;height:2px;background:#dedede;"></div>
<div style="position:absolute;left:1170px;top:1734.7px;width:943px;height:2px;background:#dedede;"></div>
<div style="position:absolute;left:1375px;top:447px;width:2px;height:1243px;background:#dedede;"></div>
<div style="position:absolute;left:1583px;top:447px;width:2px;height:1243px;background:#dedede;"></div>
<div style="position:absolute;left:1791px;top:447px;width:2px;height:1243px;background:#dedede;"></div>
<div style="position:absolute;left:1999px;top:447px;width:2px;height:1243px;background:#dedede;"></div>
<div style="position:absolute;left:78px;top:446px;width:1092px;height:1260px;box-sizing:border-box;border:4px solid #4dab62;background:#fff;"></div>
<div style="position:absolute;left:80px;top:445px;width:1088px;height:2.2px;background:#4a9526;"></div>
<div style="position:absolute;left:80px;top:447.2px;width:1088px;height:0.9px;background:#86bb7e;"></div>
<div style="position:absolute;left:77px;top:447.8px;width:2.2px;height:1243px;background:#4a9526;"></div>
<div style="position:absolute;left:79.2px;top:448px;width:0.9px;height:1243px;background:#86bb7e;"></div>
<div style="position:absolute;left:84px;top:452px;width:459px;height:51px;background:#93926f;"></div>
<div style="position:absolute;left:545px;top:452px;width:206px;height:51px;background:#8e9a74;"></div>
<div style="position:absolute;left:753px;top:452px;width:206px;height:51px;background:#8e9a74;"></div>
<div style="position:absolute;left:961px;top:452px;width:203px;height:51px;background:#8e9a74;"></div>
<div style="position:absolute;left:84px;top:502.75px;width:1080px;height:2px;background:#75807a;"></div>
<div style="position:absolute;left:84px;top:505px;width:459px;height:54px;background:#e6efe6;"></div>
<div style="position:absolute;left:545px;top:505px;width:206px;height:54px;background:#e6efe6;"></div>
<div style="position:absolute;left:753px;top:505px;width:206px;height:54px;background:#e6efe6;"></div>
<div style="position:absolute;left:961px;top:505px;width:203px;height:54px;background:#e6efe6;"></div>
<div style="position:absolute;left:84px;top:558.75px;width:1080px;height:2px;background:#75807a;"></div>
<div style="position:absolute;left:84px;top:561px;width:459px;height:54px;background:#e6efe6;"></div>
<div style="position:absolute;left:545px;top:561px;width:206px;height:54px;background:#e6efe6;"></div>
<div style="position:absolute;left:753px;top:561px;width:206px;height:54px;background:#e6efe6;"></div>
<div style="position:absolute;left:961px;top:561px;width:203px;height:54px;background:#e6efe6;"></div>
<div style="position:absolute;left:84px;top:614.75px;width:1080px;height:2px;background:#75807a;"></div>
<div style="position:absolute;left:84px;top:617px;width:459px;height:54px;background:#e6efe6;"></div>
<div style="position:absolute;left:545px;top:617px;width:206px;height:54px;background:#e6efe6;"></div>
<div style="position:absolute;left:753px;top:617px;width:206px;height:54px;background:#e6efe6;"></div>
<div style="position:absolute;left:961px;top:617px;width:203px;height:54px;background:#e6efe6;"></div>
<div style="position:absolute;left:84px;top:670.75px;width:1080px;height:2px;background:#75807a;"></div>
<div style="position:absolute;left:84px;top:673px;width:459px;height:54px;background:#e6efe6;"></div>
<div style="position:absolute;left:545px;top:673px;width:206px;height:54px;background:#e6efe6;"></div>
<div style="position:absolute;left:753px;top:673px;width:206px;height:54px;background:#e6efe6;"></div>
<div style="position:absolute;left:961px;top:673px;width:203px;height:54px;background:#e6efe6;"></div>
<div style="position:absolute;left:84px;top:726.75px;width:1080px;height:2px;background:#75807a;"></div>
<div style="position:absolute;left:84px;top:729px;width:459px;height:54px;background:#e6efe6;"></div>
<div style="position:absolute;left:545px;top:729px;width:206px;height:54px;background:#e6efe6;"></div>
<div style="position:absolute;left:753px;top:729px;width:206px;height:54px;background:#e6efe6;"></div>
<div style="position:absolute;left:961px;top:729px;width:203px;height:54px;background:#e6efe6;"></div>
<div style="position:absolute;left:84px;top:782.75px;width:1080px;height:2px;background:#75807a;"></div>
<div style="position:absolute;left:84px;top:785px;width:459px;height:54px;background:#e6efe6;"></div>
<div style="position:absolute;left:545px;top:785px;width:206px;height:54px;background:#e6efe6;"></div>
<div style="position:absolute;left:753px;top:785px;width:206px;height:54px;background:#e6efe6;"></div>
<div style="position:absolute;left:961px;top:785px;width:203px;height:54px;background:#e6efe6;"></div>
<div style="position:absolute;left:84px;top:838.75px;width:1080px;height:2px;background:#75807a;"></div>
<div style="position:absolute;left:84px;top:841px;width:459px;height:54px;background:#e6efe6;"></div>
<div style="position:absolute;left:545px;top:841px;width:206px;height:54px;background:#e6efe6;"></div>
<div style="position:absolute;left:753px;top:841px;width:206px;height:54px;background:#e6efe6;"></div>
<div style="position:absolute;left:961px;top:841px;width:203px;height:54px;background:#e6efe6;"></div>
<div style="position:absolute;left:84px;top:894.75px;width:1080px;height:2px;background:#75807a;"></div>
<div style="position:absolute;left:84px;top:897px;width:459px;height:54px;background:#e6efe6;"></div>
<div style="position:absolute;left:545px;top:897px;width:206px;height:54px;background:#e6efe6;"></div>
<div style="position:absolute;left:753px;top:897px;width:206px;height:54px;background:#e6efe6;"></div>
<div style="position:absolute;left:961px;top:897px;width:203px;height:54px;background:#e6efe6;"></div>
<div style="position:absolute;left:84px;top:950.75px;width:1080px;height:2px;background:#75807a;"></div>
<div style="position:absolute;left:84px;top:953px;width:459px;height:54px;background:#e6efe6;"></div>
<div style="position:absolute;left:545px;top:953px;width:206px;height:54px;background:#e6efe6;"></div>
<div style="position:absolute;left:753px;top:953px;width:206px;height:54px;background:#e6efe6;"></div>
<div style="position:absolute;left:961px;top:953px;width:203px;height:54px;background:#e6efe6;"></div>
<div style="position:absolute;left:84px;top:1006.75px;width:1080px;height:2px;background:#75807a;"></div>
<div style="position:absolute;left:84px;top:1009px;width:459px;height:54px;background:#e6efe6;"></div>
<div style="position:absolute;left:545px;top:1009px;width:206px;height:54px;background:#e6efe6;"></div>
<div style="position:absolute;left:753px;top:1009px;width:206px;height:54px;background:#e6efe6;"></div>
<div style="position:absolute;left:961px;top:1009px;width:203px;height:54px;background:#e6efe6;"></div>
<div style="position:absolute;left:84px;top:1062.75px;width:1080px;height:2px;background:#75807a;"></div>
<div style="position:absolute;left:84px;top:1065px;width:459px;height:54px;background:#e6efe6;"></div>
<div style="position:absolute;left:545px;top:1065px;width:206px;height:54px;background:#e6efe6;"></div>
<div style="position:absolute;left:753px;top:1065px;width:206px;height:54px;background:#e6efe6;"></div>
<div style="position:absolute;left:961px;top:1065px;width:203px;height:54px;background:#e6efe6;"></div>
<div style="position:absolute;left:84px;top:1118.75px;width:1080px;height:2px;background:#75807a;"></div>
<div style="position:absolute;left:84px;top:1121px;width:459px;height:54px;background:#e6efe6;"></div>
<div style="position:absolute;left:545px;top:1121px;width:206px;height:54px;background:#e6efe6;"></div>
<div style="position:absolute;left:753px;top:1121px;width:206px;height:54px;background:#e6efe6;"></div>
<div style="position:absolute;left:961px;top:1121px;width:203px;height:54px;background:#e6efe6;"></div>
<div style="position:absolute;left:84px;top:1174.75px;width:1080px;height:2px;background:#75807a;"></div>
<div style="position:absolute;left:84px;top:1177px;width:459px;height:54px;background:#e6efe6;"></div>
<div style="position:absolute;left:545px;top:1177px;width:206px;height:54px;background:#e6efe6;"></div>
<div style="position:absolute;left:753px;top:1177px;width:206px;height:54px;background:#e6efe6;"></div>
<div style="position:absolute;left:961px;top:1177px;width:203px;height:54px;background:#e6efe6;"></div>
<div style="position:absolute;left:84px;top:1230.75px;width:1080px;height:2px;background:#75807a;"></div>
<div style="position:absolute;left:84px;top:1233px;width:459px;height:54px;background:#e6efe6;"></div>
<div style="position:absolute;left:545px;top:1233px;width:206px;height:54px;background:#e6efe6;"></div>
<div style="position:absolute;left:753px;top:1233px;width:206px;height:54px;background:#e6efe6;"></div>
<div style="position:absolute;left:961px;top:1233px;width:203px;height:54px;background:#e6efe6;"></div>
<div style="position:absolute;left:84px;top:1286.75px;width:1080px;height:2px;background:#75807a;"></div>
<div style="position:absolute;left:84px;top:1289px;width:459px;height:54px;background:#e6efe6;"></div>
<div style="position:absolute;left:545px;top:1289px;width:206px;height:54px;background:#e6efe6;"></div>
<div style="position:absolute;left:753px;top:1289px;width:206px;height:54px;background:#e6efe6;"></div>
<div style="position:absolute;left:961px;top:1289px;width:203px;height:54px;background:#e6efe6;"></div>
<div style="position:absolute;left:84px;top:1342.75px;width:1080px;height:2px;background:#75807a;"></div>
<div style="position:absolute;left:84px;top:1345px;width:459px;height:54px;background:#e6efe6;"></div>
<div style="position:absolute;left:545px;top:1345px;width:206px;height:54px;background:#e6efe6;"></div>
<div style="position:absolute;left:753px;top:1345px;width:206px;height:54px;background:#e6efe6;"></div>
<div style="position:absolute;left:961px;top:1345px;width:203px;height:54px;background:#e6efe6;"></div>
<div style="position:absolute;left:84px;top:1398.75px;width:1080px;height:2px;background:#75807a;"></div>
<div style="position:absolute;left:84px;top:1401px;width:459px;height:54px;background:#e6efe6;"></div>
<div style="position:absolute;left:545px;top:1401px;width:206px;height:54px;background:#e6efe6;"></div>
<div style="position:absolute;left:753px;top:1401px;width:206px;height:54px;background:#e6efe6;"></div>
<div style="position:absolute;left:961px;top:1401px;width:203px;height:54px;background:#e6efe6;"></div>
<div style="position:absolute;left:84px;top:1454.75px;width:1080px;height:2px;background:#75807a;"></div>
<div style="position:absolute;left:84px;top:1457px;width:459px;height:54px;background:#e6efe6;"></div>
<div style="position:absolute;left:545px;top:1457px;width:206px;height:54px;background:#e6efe6;"></div>
<div style="position:absolute;left:753px;top:1457px;width:206px;height:54px;background:#e6efe6;"></div>
<div style="position:absolute;left:961px;top:1457px;width:203px;height:54px;background:#e6efe6;"></div>
<div style="position:absolute;left:84px;top:1510.75px;width:1080px;height:2px;background:#75807a;"></div>
<div style="position:absolute;left:84px;top:1513px;width:459px;height:54px;background:#e6efe6;"></div>
<div style="position:absolute;left:545px;top:1513px;width:206px;height:54px;background:#e6efe6;"></div>
<div style="position:absolute;left:753px;top:1513px;width:206px;height:54px;background:#e6efe6;"></div>
<div style="position:absolute;left:961px;top:1513px;width:203px;height:54px;background:#e6efe6;"></div>
<div style="position:absolute;left:84px;top:1566.75px;width:1080px;height:2px;background:#75807a;"></div>
<div style="position:absolute;left:84px;top:1569px;width:459px;height:54px;background:#e6efe6;"></div>
<div style="position:absolute;left:545px;top:1569px;width:206px;height:54px;background:#e6efe6;"></div>
<div style="position:absolute;left:753px;top:1569px;width:206px;height:54px;background:#e6efe6;"></div>
<div style="position:absolute;left:961px;top:1569px;width:203px;height:54px;background:#e6efe6;"></div>
<div style="position:absolute;left:84px;top:1622.75px;width:1080px;height:2px;background:#75807a;"></div>
<div style="position:absolute;left:84px;top:1625px;width:459px;height:54px;background:#e6efe6;"></div>
<div style="position:absolute;left:545px;top:1625px;width:206px;height:54px;background:#e6efe6;"></div>
<div style="position:absolute;left:753px;top:1625px;width:206px;height:54px;background:#e6efe6;"></div>
<div style="position:absolute;left:961px;top:1625px;width:203px;height:54px;background:#e6efe6;"></div>
<div style="position:absolute;left:84px;top:1678.75px;width:1080px;height:2px;background:#75807a;"></div>
<div style="position:absolute;left:84px;top:1681px;width:459px;height:54px;background:#e6efe6;"></div>
<div style="position:absolute;left:545px;top:1681px;width:206px;height:54px;background:#e6efe6;"></div>
<div style="position:absolute;left:753px;top:1681px;width:206px;height:54px;background:#e6efe6;"></div>
<div style="position:absolute;left:961px;top:1681px;width:203px;height:54px;background:#e6efe6;"></div>
<div style="position:absolute;left:84px;top:1734.75px;width:1080px;height:2px;background:#75807a;"></div>
<div style="position:absolute;left:543px;top:452px;width:2px;height:1240px;background:#75807a;"></div>
<div style="position:absolute;left:751px;top:452px;width:2px;height:1240px;background:#75807a;"></div>
<div style="position:absolute;left:959px;top:452px;width:2px;height:1240px;background:#75807a;"></div>
<div class="t" style="top:463.03px;font-size:25.6px;color:#fff;font-weight:bold;left:-288.00px;width:1200px;text-align:center;transform:scaleX(0.9821);transform-origin:center center;-webkit-text-stroke:0.35px #fff;">Full Details</div>
<div style="position:absolute;left:510px;top:470px;width:32px;height:32px;background:#fff;border-radius:7px;"></div>
<svg style="position:absolute;left:517.6px;top:481.4px;" width="16.8" height="10" viewBox="0 0 16.8 10" fill="none"><path d="M2 2 L8.4 8 L14.8 2" stroke="#2b2b2b" stroke-width="2" stroke-linecap="round" stroke-linejoin="round"/></svg>
<div class="t" style="top:463.03px;font-size:25.6px;color:#f0fbf0;font-weight:bold;left:48.00px;width:1200px;text-align:center;transform:scaleX(1.0471);transform-origin:center center;-webkit-text-stroke:0.35px #f0fbf0;">Name</div>
<div style="position:absolute;left:718px;top:470px;width:32px;height:32px;background:#fff;border-radius:7px;"></div>
<svg style="position:absolute;left:725.6px;top:481.4px;" width="16.8" height="10" viewBox="0 0 16.8 10" fill="none"><path d="M2 2 L8.4 8 L14.8 2" stroke="#2b2b2b" stroke-width="2" stroke-linecap="round" stroke-linejoin="round"/></svg>
<div class="t" style="top:463.03px;font-size:25.6px;color:#f0fbf0;font-weight:bold;left:256.00px;width:1200px;text-align:center;transform:scaleX(1.0041);transform-origin:center center;-webkit-text-stroke:0.35px #f0fbf0;">Department</div>
<div style="position:absolute;left:926px;top:470px;width:32px;height:32px;background:#fff;border-radius:7px;"></div>
<svg style="position:absolute;left:933.6px;top:481.4px;" width="16.8" height="10" viewBox="0 0 16.8 10" fill="none"><path d="M2 2 L8.4 8 L14.8 2" stroke="#2b2b2b" stroke-width="2" stroke-linecap="round" stroke-linejoin="round"/></svg>
<div class="t" style="top:463.03px;font-size:25.6px;color:#f0fbf0;font-weight:bold;left:464.00px;width:1200px;text-align:center;transform:scaleX(0.9836);transform-origin:center center;-webkit-text-stroke:0.35px #f0fbf0;">City</div>
<div style="position:absolute;left:1134px;top:470px;width:32px;height:32px;background:#fff;border-radius:7px;"></div>
<svg style="position:absolute;left:1141.6px;top:481.4px;" width="16.8" height="10" viewBox="0 0 16.8 10" fill="none"><path d="M2 2 L8.4 8 L14.8 2" stroke="#2b2b2b" stroke-width="2" stroke-linecap="round" stroke-linejoin="round"/></svg>
<div class="t" style="top:518.86px;font-size:25.8px;color:#0c140c;left:-288.30px;width:1200px;text-align:center;transform:scaleX(1.0155);transform-origin:center center;-webkit-text-stroke:0.3px #0c140c;">John Smith, Marketing, New York</div>
<div class="t" style="top:518.86px;font-size:25.8px;color:#0c140c;left:47.70px;width:1200px;text-align:center;transform:scaleX(1.0489);transform-origin:center center;-webkit-text-stroke:0.3px #0c140c;">John Smith</div>
<div class="t" style="top:518.86px;font-size:25.8px;color:#0c140c;left:259.10px;width:1200px;text-align:center;transform:scaleX(1.0703);transform-origin:center center;-webkit-text-stroke:0.3px #0c140c;">Marketing</div>
<div class="t" style="top:518.86px;font-size:25.8px;color:#0c140c;left:467.30px;width:1200px;text-align:center;transform:scaleX(1.0105);transform-origin:center center;-webkit-text-stroke:0.3px #0c140c;">New York</div>
<div class="t" style="top:574.86px;font-size:25.8px;color:#0c140c;left:-288.30px;width:1200px;text-align:center;transform:scaleX(1.0093);transform-origin:center center;-webkit-text-stroke:0.3px #0c140c;">Maria Lopez, Sales, Los Angeles</div>
<div class="t" style="top:574.86px;font-size:25.8px;color:#0c140c;left:47.70px;width:1200px;text-align:center;transform:scaleX(1.0399);transform-origin:center center;-webkit-text-stroke:0.3px #0c140c;">Maria Lopez</div>
<div class="t" style="top:574.86px;font-size:25.8px;color:#0c140c;left:259.10px;width:1200px;text-align:center;transform:scaleX(1.0027);transform-origin:center center;-webkit-text-stroke:0.3px #0c140c;">Sales</div>
<div class="t" style="top:574.86px;font-size:25.8px;color:#0c140c;left:467.30px;width:1200px;text-align:center;transform:scaleX(1.0320);transform-origin:center center;-webkit-text-stroke:0.3px #0c140c;">Los Angeles</div>
<div class="t" style="top:630.86px;font-size:25.8px;color:#0c140c;left:-288.30px;width:1200px;text-align:center;transform:scaleX(0.9902);transform-origin:center center;-webkit-text-stroke:0.3px #0c140c;">Akash Patel, IT, San Francisco</div>
<div class="t" style="top:630.86px;font-size:25.8px;color:#0c140c;left:47.70px;width:1200px;text-align:center;transform:scaleX(1.0206);transform-origin:center center;-webkit-text-stroke:0.3px #0c140c;">Akash Patel</div>
<div class="t" style="top:630.86px;font-size:25.8px;color:#0c140c;left:259.10px;width:1200px;text-align:center;transform:scaleX(1.0073);transform-origin:center center;-webkit-text-stroke:0.3px #0c140c;">IT</div>
<div class="t" style="top:630.86px;font-size:25.8px;color:#0c140c;left:467.30px;width:1200px;text-align:center;transform:scaleX(1.0188);transform-origin:center center;-webkit-text-stroke:0.3px #0c140c;">San Francisco</div>
<div class="t" style="top:686.86px;font-size:25.8px;color:#0c140c;left:-288.30px;width:1200px;text-align:center;transform:scaleX(0.9777);transform-origin:center center;-webkit-text-stroke:0.3px #0c140c;">Sara Chen, HR, Chicago</div>
<div class="t" style="top:686.86px;font-size:25.8px;color:#0c140c;left:47.70px;width:1200px;text-align:center;transform:scaleX(0.9909);transform-origin:center center;-webkit-text-stroke:0.3px #0c140c;">Sara Chen</div>
<div class="t" style="top:686.86px;font-size:25.8px;color:#0c140c;left:259.10px;width:1200px;text-align:center;transform:scaleX(0.9720);transform-origin:center center;-webkit-text-stroke:0.3px #0c140c;">HR</div>
<div class="t" style="top:686.86px;font-size:25.8px;color:#0c140c;left:467.30px;width:1200px;text-align:center;transform:scaleX(1.0329);transform-origin:center center;-webkit-text-stroke:0.3px #0c140c;">Chicago</div>
<div class="t" style="top:742.86px;font-size:25.8px;color:#0c140c;left:-288.30px;width:1200px;text-align:center;transform:scaleX(1.0180);transform-origin:center center;-webkit-text-stroke:0.3px #0c140c;">Liam Brown, Finance, Boston</div>
<div class="t" style="top:742.86px;font-size:25.8px;color:#0c140c;left:47.70px;width:1200px;text-align:center;transform:scaleX(1.0413);transform-origin:center center;-webkit-text-stroke:0.3px #0c140c;">Liam Brown</div>
<div class="t" style="top:742.86px;font-size:25.8px;color:#0c140c;left:259.10px;width:1200px;text-align:center;transform:scaleX(1.0359);transform-origin:center center;-webkit-text-stroke:0.3px #0c140c;">Finance</div>
<div class="t" style="top:742.86px;font-size:25.8px;color:#0c140c;left:467.30px;width:1200px;text-align:center;transform:scaleX(1.0675);transform-origin:center center;-webkit-text-stroke:0.3px #0c140c;">Boston</div>
<div class="t" style="top:798.86px;font-size:25.8px;color:#0c140c;left:-288.30px;width:1200px;text-align:center;transform:scaleX(1.0155);transform-origin:center center;-webkit-text-stroke:0.3px #0c140c;">John Smith, Marketing, New York</div>
<div class="t" style="top:798.86px;font-size:25.8px;color:#0c140c;left:47.70px;width:1200px;text-align:center;transform:scaleX(1.0489);transform-origin:center center;-webkit-text-stroke:0.3px #0c140c;">John Smith</div>
<div class="t" style="top:798.86px;font-size:25.8px;color:#0c140c;left:259.10px;width:1200px;text-align:center;transform:scaleX(1.0703);transform-origin:center center;-webkit-text-stroke:0.3px #0c140c;">Marketing</div>
<div class="t" style="top:798.86px;font-size:25.8px;color:#0c140c;left:467.30px;width:1200px;text-align:center;transform:scaleX(1.0105);transform-origin:center center;-webkit-text-stroke:0.3px #0c140c;">New York</div>
<div class="t" style="top:854.86px;font-size:25.8px;color:#0c140c;left:-288.30px;width:1200px;text-align:center;transform:scaleX(1.0093);transform-origin:center center;-webkit-text-stroke:0.3px #0c140c;">Maria Lopez, Sales, Los Angeles</div>
<div class="t" style="top:854.86px;font-size:25.8px;color:#0c140c;left:47.70px;width:1200px;text-align:center;transform:scaleX(1.0399);transform-origin:center center;-webkit-text-stroke:0.3px #0c140c;">Maria Lopez</div>
<div class="t" style="top:854.86px;font-size:25.8px;color:#0c140c;left:259.10px;width:1200px;text-align:center;transform:scaleX(1.0027);transform-origin:center center;-webkit-text-stroke:0.3px #0c140c;">Sales</div>
<div class="t" style="top:854.86px;font-size:25.8px;color:#0c140c;left:467.30px;width:1200px;text-align:center;transform:scaleX(1.0320);transform-origin:center center;-webkit-text-stroke:0.3px #0c140c;">Los Angeles</div>
<div class="t" style="top:910.86px;font-size:25.8px;color:#0c140c;left:-288.30px;width:1200px;text-align:center;transform:scaleX(0.9902);transform-origin:center center;-webkit-text-stroke:0.3px #0c140c;">Akash Patel, IT, San Francisco</div>
<div class="t" style="top:910.86px;font-size:25.8px;color:#0c140c;left:47.70px;width:1200px;text-align:center;transform:scaleX(1.0206);transform-origin:center center;-webkit-text-stroke:0.3px #0c140c;">Akash Patel</div>
<div class="t" style="top:910.86px;font-size:25.8px;color:#0c140c;left:259.10px;width:1200px;text-align:center;transform:scaleX(1.0073);transform-origin:center center;-webkit-text-stroke:0.3px #0c140c;">IT</div>
<div class="t" style="top:910.86px;font-size:25.8px;color:#0c140c;left:467.30px;width:1200px;text-align:center;transform:scaleX(1.0188);transform-origin:center center;-webkit-text-stroke:0.3px #0c140c;">San Francisco</div>
<div class="t" style="top:966.86px;font-size:25.8px;color:#0c140c;left:-288.30px;width:1200px;text-align:center;transform:scaleX(0.9777);transform-origin:center center;-webkit-text-stroke:0.3px #0c140c;">Sara Chen, HR, Chicago</div>
<div class="t" style="top:966.86px;font-size:25.8px;color:#0c140c;left:47.70px;width:1200px;text-align:center;transform:scaleX(0.9909);transform-origin:center center;-webkit-text-stroke:0.3px #0c140c;">Sara Chen</div>
<div class="t" style="top:966.86px;font-size:25.8px;color:#0c140c;left:259.10px;width:1200px;text-align:center;transform:scaleX(0.9720);transform-origin:center center;-webkit-text-stroke:0.3px #0c140c;">HR</div>
<div class="t" style="top:966.86px;font-size:25.8px;color:#0c140c;left:467.30px;width:1200px;text-align:center;transform:scaleX(1.0329);transform-origin:center center;-webkit-text-stroke:0.3px #0c140c;">Chicago</div>
<div class="t" style="top:1022.86px;font-size:25.8px;color:#0c140c;left:-288.30px;width:1200px;text-align:center;transform:scaleX(1.0180);transform-origin:center center;-webkit-text-stroke:0.3px #0c140c;">Liam Brown, Finance, Boston</div>
<div class="t" style="top:1022.86px;font-size:25.8px;color:#0c140c;left:47.70px;width:1200px;text-align:center;transform:scaleX(1.0413);transform-origin:center center;-webkit-text-stroke:0.3px #0c140c;">Liam Brown</div>
<div class="t" style="top:1022.86px;font-size:25.8px;color:#0c140c;left:259.10px;width:1200px;text-align:center;transform:scaleX(1.0359);transform-origin:center center;-webkit-text-stroke:0.3px #0c140c;">Finance</div>
<div class="t" style="top:1022.86px;font-size:25.8px;color:#0c140c;left:467.30px;width:1200px;text-align:center;transform:scaleX(1.0675);transform-origin:center center;-webkit-text-stroke:0.3px #0c140c;">Boston</div>
<div class="t" style="top:1078.86px;font-size:25.8px;color:#0c140c;left:-288.30px;width:1200px;text-align:center;transform:scaleX(1.0155);transform-origin:center center;-webkit-text-stroke:0.3px #0c140c;">John Smith, Marketing, New York</div>
<div class="t" style="top:1078.86px;font-size:25.8px;color:#0c140c;left:47.70px;width:1200px;text-align:center;transform:scaleX(1.0489);transform-origin:center center;-webkit-text-stroke:0.3px #0c140c;">John Smith</div>
<div class="t" style="top:1078.86px;font-size:25.8px;color:#0c140c;left:259.10px;width:1200px;text-align:center;transform:scaleX(1.0703);transform-origin:center center;-webkit-text-stroke:0.3px #0c140c;">Marketing</div>
<div class="t" style="top:1078.86px;font-size:25.8px;color:#0c140c;left:467.30px;width:1200px;text-align:center;transform:scaleX(1.0105);transform-origin:center center;-webkit-text-stroke:0.3px #0c140c;">New York</div>
<div class="t" style="top:1134.86px;font-size:25.8px;color:#0c140c;left:-288.30px;width:1200px;text-align:center;transform:scaleX(1.0093);transform-origin:center center;-webkit-text-stroke:0.3px #0c140c;">Maria Lopez, Sales, Los Angeles</div>
<div class="t" style="top:1134.86px;font-size:25.8px;color:#0c140c;left:47.70px;width:1200px;text-align:center;transform:scaleX(1.0399);transform-origin:center center;-webkit-text-stroke:0.3px #0c140c;">Maria Lopez</div>
<div class="t" style="top:1134.86px;font-size:25.8px;color:#0c140c;left:259.10px;width:1200px;text-align:center;transform:scaleX(1.0027);transform-origin:center center;-webkit-text-stroke:0.3px #0c140c;">Sales</div>
<div class="t" style="top:1134.86px;font-size:25.8px;color:#0c140c;left:467.30px;width:1200px;text-align:center;transform:scaleX(1.0320);transform-origin:center center;-webkit-text-stroke:0.3px #0c140c;">Los Angeles</div>
<div class="t" style="top:1190.86px;font-size:25.8px;color:#0c140c;left:-288.30px;width:1200px;text-align:center;transform:scaleX(0.9902);transform-origin:center center;-webkit-text-stroke:0.3px #0c140c;">Akash Patel, IT, San Francisco</div>
<div class="t" style="top:1190.86px;font-size:25.8px;color:#0c140c;left:47.70px;width:1200px;text-align:center;transform:scaleX(1.0206);transform-origin:center center;-webkit-text-stroke:0.3px #0c140c;">Akash Patel</div>
<div class="t" style="top:1190.86px;font-size:25.8px;color:#0c140c;left:259.10px;width:1200px;text-align:center;transform:scaleX(1.0073);transform-origin:center center;-webkit-text-stroke:0.3px #0c140c;">IT</div>
<div class="t" style="top:1190.86px;font-size:25.8px;color:#0c140c;left:467.30px;width:1200px;text-align:center;transform:scaleX(1.0188);transform-origin:center center;-webkit-text-stroke:0.3px #0c140c;">San Francisco</div>
<div class="t" style="top:1246.86px;font-size:25.8px;color:#0c140c;left:-288.30px;width:1200px;text-align:center;transform:scaleX(0.9777);transform-origin:center center;-webkit-text-stroke:0.3px #0c140c;">Sara Chen, HR, Chicago</div>
<div class="t" style="top:1246.86px;font-size:25.8px;color:#0c140c;left:47.70px;width:1200px;text-align:center;transform:scaleX(0.9909);transform-origin:center center;-webkit-text-stroke:0.3px #0c140c;">Sara Chen</div>
<div class="t" style="top:1246.86px;font-size:25.8px;color:#0c140c;left:259.10px;width:1200px;text-align:center;transform:scaleX(0.9720);transform-origin:center center;-webkit-text-stroke:0.3px #0c140c;">HR</div>
<div class="t" style="top:1246.86px;font-size:25.8px;color:#0c140c;left:467.30px;width:1200px;text-align:center;transform:scaleX(1.0329);transform-origin:center center;-webkit-text-stroke:0.3px #0c140c;">Chicago</div>
<div class="t" style="top:1302.86px;font-size:25.8px;color:#0c140c;left:-288.30px;width:1200px;text-align:center;transform:scaleX(1.0180);transform-origin:center center;-webkit-text-stroke:0.3px #0c140c;">Liam Brown, Finance, Boston</div>
<div class="t" style="top:1302.86px;font-size:25.8px;color:#0c140c;left:47.70px;width:1200px;text-align:center;transform:scaleX(1.0413);transform-origin:center center;-webkit-text-stroke:0.3px #0c140c;">Liam Brown</div>
<div class="t" style="top:1302.86px;font-size:25.8px;color:#0c140c;left:259.10px;width:1200px;text-align:center;transform:scaleX(1.0359);transform-origin:center center;-webkit-text-stroke:0.3px #0c140c;">Finance</div>
<div class="t" style="top:1302.86px;font-size:25.8px;color:#0c140c;left:467.30px;width:1200px;text-align:center;transform:scaleX(1.0675);transform-origin:center center;-webkit-text-stroke:0.3px #0c140c;">Boston</div>
<div class="t" style="top:1358.86px;font-size:25.8px;color:#0c140c;left:-288.30px;width:1200px;text-align:center;transform:scaleX(1.0155);transform-origin:center center;-webkit-text-stroke:0.3px #0c140c;">John Smith, Marketing, New York</div>
<div class="t" style="top:1358.86px;font-size:25.8px;color:#0c140c;left:47.70px;width:1200px;text-align:center;transform:scaleX(1.0489);transform-origin:center center;-webkit-text-stroke:0.3px #0c140c;">John Smith</div>
<div class="t" style="top:1358.86px;font-size:25.8px;color:#0c140c;left:259.10px;width:1200px;text-align:center;transform:scaleX(1.0703);transform-origin:center center;-webkit-text-stroke:0.3px #0c140c;">Marketing</div>
<div class="t" style="top:1358.86px;font-size:25.8px;color:#0c140c;left:467.30px;width:1200px;text-align:center;transform:scaleX(1.0105);transform-origin:center center;-webkit-text-stroke:0.3px #0c140c;">New York</div>
<div class="t" style="top:1414.86px;font-size:25.8px;color:#0c140c;left:-288.30px;width:1200px;text-align:center;transform:scaleX(1.0093);transform-origin:center center;-webkit-text-stroke:0.3px #0c140c;">Maria Lopez, Sales, Los Angeles</div>
<div class="t" style="top:1414.86px;font-size:25.8px;color:#0c140c;left:47.70px;width:1200px;text-align:center;transform:scaleX(1.0399);transform-origin:center center;-webkit-text-stroke:0.3px #0c140c;">Maria Lopez</div>
<div class="t" style="top:1414.86px;font-size:25.8px;color:#0c140c;left:259.10px;width:1200px;text-align:center;transform:scaleX(1.0027);transform-origin:center center;-webkit-text-stroke:0.3px #0c140c;">Sales</div>
<div class="t" style="top:1414.86px;font-size:25.8px;color:#0c140c;left:467.30px;width:1200px;text-align:center;transform:scaleX(1.0320);transform-origin:center center;-webkit-text-stroke:0.3px #0c140c;">Los Angeles</div>
<div class="t" style="top:1470.86px;font-size:25.8px;color:#0c140c;left:-288.30px;width:1200px;text-align:center;transform:scaleX(0.9902);transform-origin:center center;-webkit-text-stroke:0.3px #0c140c;">Akash Patel, IT, San Francisco</div>
<div class="t" style="top:1470.86px;font-size:25.8px;color:#0c140c;left:47.70px;width:1200px;text-align:center;transform:scaleX(1.0206);transform-origin:center center;-webkit-text-stroke:0.3px #0c140c;">Akash Patel</div>
<div class="t" style="top:1470.86px;font-size:25.8px;color:#0c140c;left:259.10px;width:1200px;text-align:center;transform:scaleX(1.0073);transform-origin:center center;-webkit-text-stroke:0.3px #0c140c;">IT</div>
<div class="t" style="top:1470.86px;font-size:25.8px;color:#0c140c;left:467.30px;width:1200px;text-align:center;transform:scaleX(1.0188);transform-origin:center center;-webkit-text-stroke:0.3px #0c140c;">San Francisco</div>
<div class="t" style="top:1526.86px;font-size:25.8px;color:#0c140c;left:-288.30px;width:1200px;text-align:center;transform:scaleX(0.9777);transform-origin:center center;-webkit-text-stroke:0.3px #0c140c;">Sara Chen, HR, Chicago</div>
<div class="t" style="top:1526.86px;font-size:25.8px;color:#0c140c;left:47.70px;width:1200px;text-align:center;transform:scaleX(0.9909);transform-origin:center center;-webkit-text-stroke:0.3px #0c140c;">Sara Chen</div>
<div class="t" style="top:1526.86px;font-size:25.8px;color:#0c140c;left:259.10px;width:1200px;text-align:center;transform:scaleX(0.9720);transform-origin:center center;-webkit-text-stroke:0.3px #0c140c;">HR</div>
<div class="t" style="top:1526.86px;font-size:25.8px;color:#0c140c;left:467.30px;width:1200px;text-align:center;transform:scaleX(1.0329);transform-origin:center center;-webkit-text-stroke:0.3px #0c140c;">Chicago</div>
<div class="t" style="top:1582.86px;font-size:25.8px;color:#0c140c;left:-288.30px;width:1200px;text-align:center;transform:scaleX(1.0180);transform-origin:center center;-webkit-text-stroke:0.3px #0c140c;">Liam Brown, Finance, Boston</div>
<div class="t" style="top:1582.86px;font-size:25.8px;color:#0c140c;left:47.70px;width:1200px;text-align:center;transform:scaleX(1.0413);transform-origin:center center;-webkit-text-stroke:0.3px #0c140c;">Liam Brown</div>
<div class="t" style="top:1582.86px;font-size:25.8px;color:#0c140c;left:259.10px;width:1200px;text-align:center;transform:scaleX(1.0359);transform-origin:center center;-webkit-text-stroke:0.3px #0c140c;">Finance</div>
<div class="t" style="top:1582.86px;font-size:25.8px;color:#0c140c;left:467.30px;width:1200px;text-align:center;transform:scaleX(1.0675);transform-origin:center center;-webkit-text-stroke:0.3px #0c140c;">Boston</div>
<div class="t" style="top:1638.86px;font-size:25.8px;color:#0c140c;left:-288.30px;width:1200px;text-align:center;transform:scaleX(1.0155);transform-origin:center center;-webkit-text-stroke:0.3px #0c140c;">John Smith, Marketing, New York</div>
<div class="t" style="top:1638.86px;font-size:25.8px;color:#0c140c;left:47.70px;width:1200px;text-align:center;transform:scaleX(1.0489);transform-origin:center center;-webkit-text-stroke:0.3px #0c140c;">John Smith</div>
<div class="t" style="top:1638.86px;font-size:25.8px;color:#0c140c;left:259.10px;width:1200px;text-align:center;transform:scaleX(1.0703);transform-origin:center center;-webkit-text-stroke:0.3px #0c140c;">Marketing</div>
<div class="t" style="top:1638.86px;font-size:25.8px;color:#0c140c;left:467.30px;width:1200px;text-align:center;transform:scaleX(1.0105);transform-origin:center center;-webkit-text-stroke:0.3px #0c140c;">New York</div>
<div class="t" style="top:1694.86px;font-size:25.8px;color:#0c140c;left:-288.30px;width:1200px;text-align:center;transform:scaleX(1.0093);transform-origin:center center;-webkit-text-stroke:0.3px #0c140c;">Maria Lopez, Sales, Los Angeles</div>
<div class="t" style="top:1694.86px;font-size:25.8px;color:#0c140c;left:47.70px;width:1200px;text-align:center;transform:scaleX(1.0399);transform-origin:center center;-webkit-text-stroke:0.3px #0c140c;">Maria Lopez</div>
<div class="t" style="top:1694.86px;font-size:25.8px;color:#0c140c;left:259.10px;width:1200px;text-align:center;transform:scaleX(1.0027);transform-origin:center center;-webkit-text-stroke:0.3px #0c140c;">Sales</div>
<div class="t" style="top:1694.86px;font-size:25.8px;color:#0c140c;left:467.30px;width:1200px;text-align:center;transform:scaleX(1.0320);transform-origin:center center;-webkit-text-stroke:0.3px #0c140c;">Los Angeles</div>
<div style="position:absolute;left:0px;top:401.3px;width:80px;height:46.5px;box-sizing:border-box;background:#f3f3f3;border:1.3px solid #c9c7ce;border-top-width:1.6px;"></div>
<svg style="position:absolute;left:44px;top:410px;" width="32" height="32" viewBox="0 0 32 32" fill="none"><circle cx="26.0" cy="4.0" r="2" fill="#868686"/><circle cx="18.0" cy="12.0" r="2" fill="#868686"/><circle cx="26.0" cy="12.0" r="2" fill="#868686"/><circle cx="10.0" cy="20.0" r="2" fill="#868686"/><circle cx="18.0" cy="20.0" r="2" fill="#868686"/><circle cx="26.0" cy="20.0" r="2" fill="#868686"/><circle cx="2.0" cy="28.0" r="2" fill="#868686"/><circle cx="10.0" cy="28.0" r="2" fill="#868686"/><circle cx="18.0" cy="28.0" r="2" fill="#868686"/><circle cx="26.0" cy="28.0" r="2" fill="#868686"/></svg>
<div style="position:absolute;left:1160px;top:1688px;width:16px;height:4px;background:#4dab62;"></div>
<div style="position:absolute;left:2113px;top:350px;width:648px;height:1340px;background:#fafafa;"></div>
<div style="position:absolute;left:2112px;top:350px;width:2px;height:1340px;background:#dcdcdc;"></div>
<div class="t" style="top:393.68px;font-size:31.8px;color:#1d1d1d;font-weight:bold;left:2136.75px;transform:scaleX(0.9790);transform-origin:left center;">Table</div>
<svg style="position:absolute;left:2703px;top:392px;" width="34" height="34" viewBox="0 0 34 34" fill="none"><circle cx="17" cy="17" r="16" fill="#8c8c8c"/><path d="M10.6 10.6 L23.4 23.4 M23.4 10.6 L10.6 23.4" stroke="#fff" stroke-width="3.2" stroke-linecap="round"/></svg>
<div style="position:absolute;left:2139px;top:457.4px;width:595.4px;height:53.2px;box-sizing:border-box;background:#fff;border:1px solid #ebebeb;border-bottom:1.8px solid #b9b9b9;"></div>
<div class="t" style="top:473.96px;font-size:25.8px;color:#5c84d8;left:2145.22px;transform:scaleX(1.0053);transform-origin:left center;">Sheet1.A1:D26</div>
<svg style="position:absolute;left:2690px;top:468px;" width="32" height="32" viewBox="0 0 32 32" fill="none"><rect x="2.9" y="2.8" width="21.1" height="18.5" rx="1.6" fill="#e6e6e6"/><rect x="13.3" y="15" width="10.7" height="6.3" fill="#fff"/><path d="M2.9 9 H24 M2.9 15 H24" stroke="#8c8c8c" stroke-width="1.7"/><path d="M13.3 2.8 V21.3" stroke="#4a4a4a" stroke-width="1.4"/><rect x="2.9" y="2.8" width="21.1" height="18.5" rx="1.6" stroke="#4a4a4a" stroke-width="1.4"/><path d="M24 4 V20" stroke="#8c8c8c" stroke-width="1.4"/><path d="M16.1 17.5 L28.8 21.4 L24.6 23.8 L29.2 27.5 L26.2 29.9 L21.8 25.6 L19.9 29.9 Z" fill="#5b8fdb"/></svg>
<div style="position:absolute;left:2138px;top:545px;width:600px;height:2px;background:#ebebeb;"></div>
<div class="t" style="top:589.57px;font-size:26.5px;color:#222;left:2135.72px;transform:scaleX(1.0482);transform-origin:left center;-webkit-text-stroke:0.25px #222;">Name:</div>
<div style="position:absolute;left:2242px;top:578px;width:494px;height:48px;box-sizing:border-box;background:#fff;border:1.6px solid #c6c6c6;border-radius:9px;box-shadow:0 1px 1px rgba(0,0,0,0.08);"></div>
<div class="t" style="top:588.36px;font-size:25.8px;color:#222;left:2250.44px;transform:scaleX(0.9734);transform-origin:left center;-webkit-text-stroke:0.25px #222;">Table1</div>
<div class="t" style="top:661.51px;font-size:24.2px;color:#666;left:2136.77px;transform:scaleX(1.0740);transform-origin:left center;">Options</div>
<div style="position:absolute;left:2138px;top:711px;width:28px;height:28px;border-radius:6px;background:linear-gradient(#55a868,#3d9352);box-shadow:0 1px 2px rgba(0,0,0,0.25);"></div>
<svg style="position:absolute;left:2138px;top:711px;" width="28" height="28" viewBox="0 0 28 28" fill="none"><path d="M5.6 14.9 L12.1 21.3 L22 6.8" stroke="#fff" stroke-width="3.5" stroke-linecap="round" stroke-linejoin="round"/></svg>
<div class="t" style="top:712.19px;font-size:26px;color:#222;left:2176.83px;transform:scaleX(1.0152);transform-origin:left center;-webkit-text-stroke:0.25px #222;">Header Row</div>
<div style="position:absolute;left:2454px;top:711px;width:28px;height:28px;box-sizing:border-box;border-radius:6px;background:#fff;border:1.4px solid #cfcfcf;box-shadow:0 1px 1.5px rgba(0,0,0,0.10);"></div>
<div class="t" style="top:712.19px;font-size:26px;color:#222;left:2492.45px;transform:scaleX(1.0527);transform-origin:left center;-webkit-text-stroke:0.25px #222;">First Column</div>
<div style="position:absolute;left:2138px;top:765px;width:28px;height:28px;box-sizing:border-box;border-radius:6px;background:#fff;border:1.4px solid #cfcfcf;box-shadow:0 1px 1.5px rgba(0,0,0,0.10);"></div>
<div class="t" style="top:766.19px;font-size:26px;color:#222;left:2178.42px;transform:scaleX(0.9913);transform-origin:left center;-webkit-text-stroke:0.25px #222;">Total Row</div>
<div style="position:absolute;left:2454px;top:765px;width:28px;height:28px;box-sizing:border-box;border-radius:6px;background:#fff;border:1.4px solid #cfcfcf;box-shadow:0 1px 1.5px rgba(0,0,0,0.10);"></div>
<div class="t" style="top:766.19px;font-size:26px;color:#222;left:2492.46px;transform:scaleX(1.0518);transform-origin:left center;-webkit-text-stroke:0.25px #222;">Last Column</div>
<div style="position:absolute;left:2138px;top:819px;width:28px;height:28px;border-radius:6px;background:linear-gradient(#55a868,#3d9352);box-shadow:0 1px 2px rgba(0,0,0,0.25);"></div>
<svg style="position:absolute;left:2138px;top:819px;" width="28" height="28" viewBox="0 0 28 28" fill="none"><path d="M5.6 14.9 L12.1 21.3 L22 6.8" stroke="#fff" stroke-width="3.5" stroke-linecap="round" stroke-linejoin="round"/></svg>
<div class="t" style="top:820.19px;font-size:26px;color:#222;left:2176.83px;transform:scaleX(1.0195);transform-origin:left center;-webkit-text-stroke:0.25px #222;">Banded Rows</div>
<div style="position:absolute;left:2454px;top:819px;width:28px;height:28px;box-sizing:border-box;border-radius:6px;background:#fff;border:1.4px solid #cfcfcf;box-shadow:0 1px 1.5px rgba(0,0,0,0.10);"></div>
<div class="t" style="top:820.19px;font-size:26px;color:#222;left:2492.48px;transform:scaleX(1.0403);transform-origin:left center;-webkit-text-stroke:0.25px #222;">Banded Columns</div>
<div style="position:absolute;left:2138px;top:873px;width:28px;height:28px;border-radius:6px;background:linear-gradient(#55a868,#3d9352);box-shadow:0 1px 2px rgba(0,0,0,0.25);"></div>
<svg style="position:absolute;left:2138px;top:873px;" width="28" height="28" viewBox="0 0 28 28" fill="none"><path d="M5.6 14.9 L12.1 21.3 L22 6.8" stroke="#fff" stroke-width="3.5" stroke-linecap="round" stroke-linejoin="round"/></svg>
<div class="t" style="top:874.19px;font-size:26px;color:#222;left:2176.70px;transform:scaleX(1.0789);transform-origin:left center;-webkit-text-stroke:0.25px #222;">Filter Button</div>
<div class="t" style="top:953.51px;font-size:24.2px;color:#666;left:2136.82px;transform:scaleX(1.0762);transform-origin:left center;">Styles</div>
<div style="position:absolute;left:2138px;top:1009.6px;width:600px;height:449px;background:#fff;"></div>
<div style="position:absolute;left:2139.2px;top:1010.8px;width:598.8px;height:70.6px;background:#fbfbfb;"></div>
<svg style="position:absolute;left:2160px;top:1028.2px;" width="36" height="36" viewBox="0 0 36 36" fill="none"><path d="M18 18 L9.00 2.41 A18 18 0 0 1 27.00 2.41 Z" fill="#5296d6"/><path d="M18 18 L27.00 2.41 A18 18 0 0 1 36.00 18.00 Z" fill="#66c97b"/><path d="M18 18 L36.00 18.00 A18 18 0 0 1 27.00 33.59 Z" fill="#e9c440"/><path d="M18 18 L27.00 33.59 A18 18 0 0 1 9.00 33.59 Z" fill="#d9803a"/><path d="M18 18 L9.00 33.59 A18 18 0 0 1 0.00 18.00 Z" fill="#dc5577"/><path d="M18 18 L0.00 18.00 A18 18 0 0 1 9.00 2.41 Z" fill="#8f5db4"/></svg>
<div style="position:absolute;left:2211px;top:1026.2px;width:1.8px;height:39.6px;background:#dedede;"></div>
<div style="position:absolute;left:2236px;top:1028.2px;width:36px;height:36px;border-radius:50%;background:#000000;"></div>
<div style="position:absolute;left:2288px;top:1028.2px;width:36px;height:36px;border-radius:50%;background:#5296d6;"></div>
<div style="position:absolute;left:2283.2px;top:1023.4000000000001px;width:45.6px;height:45.6px;box-sizing:border-box;border-radius:50%;border:2.4px solid #0a0a0a;background:#fff;"></div>
<div style="position:absolute;left:2288.4px;top:1028.6000000000001px;width:35.2px;height:35.2px;border-radius:50%;background:#5296d6;"></div>
<div style="position:absolute;left:2340px;top:1028.2px;width:36px;height:36px;border-radius:50%;background:#66c97b;"></div>
<div style="position:absolute;left:2392px;top:1028.2px;width:36px;height:36px;border-radius:50%;background:#e9c440;"></div>
<div style="position:absolute;left:2444px;top:1028.2px;width:36px;height:36px;border-radius:50%;background:#d9803a;"></div>
<div style="position:absolute;left:2496px;top:1028.2px;width:36px;height:36px;border-radius:50%;background:#dc5577;"></div>
<div style="position:absolute;left:2548px;top:1028.2px;width:36px;height:36px;border-radius:50%;background:#8f5db4;"></div>
<div style="position:absolute;left:2599px;top:1026.2px;width:1.8px;height:39.6px;background:#dedede;"></div>
<div style="position:absolute;left:2619.3px;top:1027px;width:101.6px;height:41.7px;box-sizing:border-box;border-radius:6px;background:#fff;border:1.3px solid #ababab;overflow:hidden;"><div style="position:absolute;left:0;top:0;width:68.6px;height:41px;background:#f0aa66;border-right:1.2px solid #b0a090;"></div></div>
<div style="position:absolute;left:2693.2px;top:1035px;width:23.6px;height:23.6px;border-radius:50%;background:radial-gradient(circle,rgba(255,255,255,0.6) 0%,rgba(255,255,255,0) 58%),conic-gradient(#e8402c 0deg,#f08a2e 45deg,#f6f36a 90deg,#8ecb4e 130deg,#4fa95a 160deg,#2f8f8f 195deg,#2a4f96 235deg,#5b2d8a 280deg,#e46bb0 325deg,#e8402c 360deg);"></div>
<div style="position:absolute;left:2140px;top:1081px;width:597px;height:1.2px;background:#dcdcdc;"></div>
<div style="position:absolute;left:2282px;top:1079.9px;width:48px;height:2.2px;background:#3c9a4e;"></div>
<div style="position:absolute;left:2138px;top:1216px;width:132px;height:112px;box-sizing:border-box;border:2.4px solid #3f9a4f;border-radius:9px;background:#e9f1e9;"></div>
<svg style="position:absolute;left:2146px;top:1104px;" width="116" height="96" viewBox="0 0 116 96" fill="none"><path d="M23.20 0 V96" stroke="#e0f7d8" stroke-width="1"/><path d="M0 19.20 H116" stroke="#e0f7d8" stroke-width="1"/><path d="M46.40 0 V96" stroke="#e0f7d8" stroke-width="1"/><path d="M0 38.40 H116" stroke="#e0f7d8" stroke-width="1"/><path d="M69.60 0 V96" stroke="#e0f7d8" stroke-width="1"/><path d="M0 57.60 H116" stroke="#e0f7d8" stroke-width="1"/><path d="M92.80 0 V96" stroke="#e0f7d8" stroke-width="1"/><path d="M0 76.80 H116" stroke="#e0f7d8" stroke-width="1"/><rect x="6.00" y="8.15" width="11.2" height="2.9" rx="0.4" fill="#111"/><rect x="29.20" y="8.15" width="11.2" height="2.9" rx="0.4" fill="#111"/><rect x="52.40" y="8.15" width="11.2" height="2.9" rx="0.4" fill="#111"/><rect x="75.60" y="8.15" width="11.2" height="2.9" rx="0.4" fill="#111"/><rect x="98.80" y="8.15" width="11.2" height="2.9" rx="0.4" fill="#111"/><rect x="6.00" y="27.35" width="11.2" height="2.9" rx="0.4" fill="#111"/><rect x="29.20" y="27.35" width="11.2" height="2.9" rx="0.4" fill="#111"/><rect x="52.40" y="27.35" width="11.2" height="2.9" rx="0.4" fill="#111"/><rect x="75.60" y="27.35" width="11.2" height="2.9" rx="0.4" fill="#111"/><rect x="98.80" y="27.35" width="11.2" height="2.9" rx="0.4" fill="#111"/><rect x="6.00" y="46.55" width="11.2" height="2.9" rx="0.4" fill="#111"/><rect x="29.20" y="46.55" width="11.2" height="2.9" rx="0.4" fill="#111"/><rect x="52.40" y="46.55" width="11.2" height="2.9" rx="0.4" fill="#111"/><rect x="75.60" y="46.55" width="11.2" height="2.9" rx="0.4" fill="#111"/><rect x="98.80" y="46.55" width="11.2" height="2.9" rx="0.4" fill="#111"/><rect x="6.00" y="65.75" width="11.2" height="2.9" rx="0.4" fill="#111"/><rect x="29.20" y="65.75" width="11.2" height="2.9" rx="0.4" fill="#111"/><rect x="52.40" y="65.75" width="11.2" height="2.9" rx="0.4" fill="#111"/><rect x="75.60" y="65.75" width="11.2" height="2.9" rx="0.4" fill="#111"/><rect x="98.80" y="65.75" width="11.2" height="2.9" rx="0.4" fill="#111"/><rect x="6.00" y="84.95" width="11.2" height="2.9" rx="0.4" fill="#111"/><rect x="29.20" y="84.95" width="11.2" height="2.9" rx="0.4" fill="#111"/><rect x="52.40" y="84.95" width="11.2" height="2.9" rx="0.4" fill="#111"/><rect x="75.60" y="84.95" width="11.2" height="2.9" rx="0.4" fill="#111"/><rect x="98.80" y="84.95" width="11.2" height="2.9" rx="0.4" fill="#111"/></svg>
<svg style="position:absolute;left:2302px;top:1104px;" width="116" height="96" viewBox="0 0 116 96" fill="none"><rect x="0.00" y="19.20" width="116.00" height="19.20" fill="#dbe8f6"/><rect x="0.00" y="57.60" width="116.00" height="19.20" fill="#dbe8f6"/><path d="M23.20 0 V96" stroke="#e0f7d8" stroke-width="1"/><path d="M46.40 0 V96" stroke="#e0f7d8" stroke-width="1"/><path d="M69.60 0 V96" stroke="#e0f7d8" stroke-width="1"/><path d="M92.80 0 V96" stroke="#e0f7d8" stroke-width="1"/><path d="M0 19.20 H116" stroke="#5b9bd5" stroke-width="1.1"/><path d="M0 1.00 H116" stroke="#5296d6" stroke-width="2"/><path d="M0 95.00 H116" stroke="#5296d6" stroke-width="2"/><rect x="6.00" y="8.15" width="11.2" height="2.9" rx="0.4" fill="#3d6fa6"/><rect x="29.20" y="8.15" width="11.2" height="2.9" rx="0.4" fill="#3d6fa6"/><rect x="52.40" y="8.15" width="11.2" height="2.9" rx="0.4" fill="#3d6fa6"/><rect x="75.60" y="8.15" width="11.2" height="2.9" rx="0.4" fill="#3d6fa6"/><rect x="98.80" y="8.15" width="11.2" height="2.9" rx="0.4" fill="#3d6fa6"/><rect x="6.00" y="27.35" width="11.2" height="2.9" rx="0.4" fill="#3d6fa6"/><rect x="29.20" y="27.35" width="11.2" height="2.9" rx="0.4" fill="#3d6fa6"/><rect x="52.40" y="27.35" width="11.2" height="2.9" rx="0.4" fill="#3d6fa6"/><rect x="75.60" y="27.35" width="11.2" height="2.9" rx="0.4" fill="#3d6fa6"/><rect x="98.80" y="27.35" width="11.2" height="2.9" rx="0.4" fill="#3d6fa6"/><rect x="6.00" y="46.55" width="11.2" height="2.9" rx="0.4" fill="#3d6fa6"/><rect x="29.20" y="46.55" width="11.2" height="2.9" rx="0.4" fill="#3d6fa6"/><rect x="52.40" y="46.55" width="11.2" height="2.9" rx="0.4" fill="#3d6fa6"/><rect x="75.60" y="46.55" width="11.2" height="2.9" rx="0.4" fill="#3d6fa6"/><rect x="98.80" y="46.55" width="11.2" height="2.9" rx="0.4" fill="#3d6fa6"/><rect x="6.00" y="65.75" width="11.2" height="2.9" rx="0.4" fill="#3d6fa6"/><rect x="29.20" y="65.75" width="11.2" height="2.9" rx="0.4" fill="#3d6fa6"/><rect x="52.40" y="65.75" width="11.2" height="2.9" rx="0.4" fill="#3d6fa6"/><rect x="75.60" y="65.75" width="11.2" height="2.9" rx="0.4" fill="#3d6fa6"/><rect x="98.80" y="65.75" width="11.2" height="2.9" rx="0.4" fill="#3d6fa6"/><rect x="6.00" y="84.95" width="11.2" height="2.9" rx="0.4" fill="#3d6fa6"/><rect x="29.20" y="84.95" width="11.2" height="2.9" rx="0.4" fill="#3d6fa6"/><rect x="52.40" y="84.95" width="11.2" height="2.9" rx="0.4" fill="#3d6fa6"/><rect x="75.60" y="84.95" width="11.2" height="2.9" rx="0.4" fill="#3d6fa6"/><rect x="98.80" y="84.95" width="11.2" height="2.9" rx="0.4" fill="#3d6fa6"/></svg>
<svg style="position:absolute;left:2458px;top:1104px;" width="116" height="96" viewBox="0 0 116 96" fill="none"><rect x="0.00" y="0.00" width="116.00" height="19.20" fill="#5296d6"/><path d="M0 38.40 H116" stroke="#9dc1ea" stroke-width="1.4"/><path d="M0 57.60 H116" stroke="#9dc1ea" stroke-width="1.4"/><path d="M0 76.80 H116" stroke="#9dc1ea" stroke-width="1.4"/><path d="M23.20 0 V19.2" stroke="#7fd08a" stroke-width="0.6"/><path d="M46.40 0 V19.2" stroke="#7fd08a" stroke-width="0.6"/><path d="M69.60 0 V19.2" stroke="#7fd08a" stroke-width="0.6"/><path d="M92.80 0 V19.2" stroke="#7fd08a" stroke-width="0.6"/><rect x="0.7" y="0.7" width="114.6" height="94.6" stroke="#5296d6" stroke-width="1.4"/><rect x="6.00" y="8.15" width="11.2" height="2.9" rx="0.4" fill="#fff"/><rect x="29.20" y="8.15" width="11.2" height="2.9" rx="0.4" fill="#fff"/><rect x="52.40" y="8.15" width="11.2" height="2.9" rx="0.4" fill="#fff"/><rect x="75.60" y="8.15" width="11.2" height="2.9" rx="0.4" fill="#fff"/><rect x="98.80" y="8.15" width="11.2" height="2.9" rx="0.4" fill="#fff"/><rect x="6.00" y="27.35" width="11.2" height="2.9" rx="0.4" fill="#111"/><rect x="29.20" y="27.35" width="11.2" height="2.9" rx="0.4" fill="#111"/><rect x="52.40" y="27.35" width="11.2" height="2.9" rx="0.4" fill="#111"/><rect x="75.60" y="27.35" width="11.2" height="2.9" rx="0.4" fill="#111"/><rect x="98.80" y="27.35" width="11.2" height="2.9" rx="0.4" fill="#111"/><rect x="6.00" y="46.55" width="11.2" height="2.9" rx="0.4" fill="#111"/><rect x="29.20" y="46.55" width="11.2" height="2.9" rx="0.4" fill="#111"/><rect x="52.40" y="46.55" width="11.2" height="2.9" rx="0.4" fill="#111"/><rect x="75.60" y="46.55" width="11.2" height="2.9" rx="0.4" fill="#111"/><rect x="98.80" y="46.55" width="11.2" height="2.9" rx="0.4" fill="#111"/><rect x="6.00" y="65.75" width="11.2" height="2.9" rx="0.4" fill="#111"/><rect x="29.20" y="65.75" width="11.2" height="2.9" rx="0.4" fill="#111"/><rect x="52.40" y="65.75" width="11.2" height="2.9" rx="0.4" fill="#111"/><rect x="75.60" y="65.75" width="11.2" height="2.9" rx="0.4" fill="#111"/><rect x="98.80" y="65.75" width="11.2" height="2.9" rx="0.4" fill="#111"/><rect x="6.00" y="84.95" width="11.2" height="2.9" rx="0.4" fill="#111"/><rect x="29.20" y="84.95" width="11.2" height="2.9" rx="0.4" fill="#111"/><rect x="52.40" y="84.95" width="11.2" height="2.9" rx="0.4" fill="#111"/><rect x="75.60" y="84.95" width="11.2" height="2.9" rx="0.4" fill="#111"/><rect x="98.80" y="84.95" width="11.2" height="2.9" rx="0.4" fill="#111"/></svg>
<svg style="position:absolute;left:2614px;top:1104px;" width="116" height="96" viewBox="0 0 116 96" fill="none"><rect x="0.00" y="19.20" width="116.00" height="19.20" fill="#dbe8f6"/><rect x="0.00" y="57.60" width="116.00" height="19.20" fill="#dbe8f6"/><path d="M23.20 0 V96" stroke="#7fb0e4" stroke-width="1.4"/><path d="M0 19.20 H116" stroke="#7fb0e4" stroke-width="1.4"/><path d="M46.40 0 V96" stroke="#7fb0e4" stroke-width="1.4"/><path d="M0 38.40 H116" stroke="#7fb0e4" stroke-width="1.4"/><path d="M69.60 0 V96" stroke="#7fb0e4" stroke-width="1.4"/><path d="M0 57.60 H116" stroke="#7fb0e4" stroke-width="1.4"/><path d="M92.80 0 V96" stroke="#7fb0e4" stroke-width="1.4"/><path d="M0 76.80 H116" stroke="#7fb0e4" stroke-width="1.4"/><rect x="0.7" y="0.7" width="114.6" height="94.6" stroke="#5296d6" stroke-width="1.6"/><rect x="6.00" y="8.15" width="11.2" height="2.9" rx="0.4" fill="#111"/><rect x="29.20" y="8.15" width="11.2" height="2.9" rx="0.4" fill="#111"/><rect x="52.40" y="8.15" width="11.2" height="2.9" rx="0.4" fill="#111"/><rect x="75.60" y="8.15" width="11.2" height="2.9" rx="0.4" fill="#111"/><rect x="98.80" y="8.15" width="11.2" height="2.9" rx="0.4" fill="#111"/><rect x="6.00" y="27.35" width="11.2" height="2.9" rx="0.4" fill="#111"/><rect x="29.20" y="27.35" width="11.2" height="2.9" rx="0.4" fill="#111"/><rect x="52.40" y="27.35" width="11.2" height="2.9" rx="0.4" fill="#111"/><rect x="75.60" y="27.35" width="11.2" height="2.9" rx="0.4" fill="#111"/><rect x="98.80" y="27.35" width="11.2" height="2.9" rx="0.4" fill="#111"/><rect x="6.00" y="46.55" width="11.2" height="2.9" rx="0.4" fill="#111"/><rect x="29.20" y="46.55" width="11.2" height="2.9" rx="0.4" fill="#111"/><rect x="52.40" y="46.55" width="11.2" height="2.9" rx="0.4" fill="#111"/><rect x="75.60" y="46.55" width="11.2" height="2.9" rx="0.4" fill="#111"/><rect x="98.80" y="46.55" width="11.2" height="2.9" rx="0.4" fill="#111"/><rect x="6.00" y="65.75" width="11.2" height="2.9" rx="0.4" fill="#111"/><rect x="29.20" y="65.75" width="11.2" height="2.9" rx="0.4" fill="#111"/><rect x="52.40" y="65.75" width="11.2" height="2.9" rx="0.4" fill="#111"/><rect x="75.60" y="65.75" width="11.2" height="2.9" rx="0.4" fill="#111"/><rect x="98.80" y="65.75" width="11.2" height="2.9" rx="0.4" fill="#111"/><rect x="6.00" y="84.95" width="11.2" height="2.9" rx="0.4" fill="#111"/><rect x="29.20" y="84.95" width="11.2" height="2.9" rx="0.4" fill="#111"/><rect x="52.40" y="84.95" width="11.2" height="2.9" rx="0.4" fill="#111"/><rect x="75.60" y="84.95" width="11.2" height="2.9" rx="0.4" fill="#111"/><rect x="98.80" y="84.95" width="11.2" height="2.9" rx="0.4" fill="#111"/></svg>
<svg style="position:absolute;left:2146px;top:1224px;" width="116" height="96" viewBox="0 0 116 96" fill="none"><rect x="0.00" y="0.00" width="116.00" height="96.00" fill="#fff"/><rect x="0.00" y="0.00" width="116.00" height="19.20" fill="#5296d6"/><rect x="0.00" y="19.20" width="116.00" height="19.20" fill="#dbe8f6"/><rect x="0.00" y="57.60" width="116.00" height="19.20" fill="#dbe8f6"/><path d="M23.20 0 V96" stroke="#a9cbee" stroke-width="0.8"/><path d="M46.40 0 V96" stroke="#a9cbee" stroke-width="0.8"/><path d="M69.60 0 V96" stroke="#a9cbee" stroke-width="0.8"/><path d="M92.80 0 V96" stroke="#a9cbee" stroke-width="0.8"/><path d="M0 38.40 H116" stroke="#a9cbee" stroke-width="0.8"/><path d="M0 57.60 H116" stroke="#a9cbee" stroke-width="0.8"/><path d="M0 76.80 H116" stroke="#a9cbee" stroke-width="0.8"/><rect x="0.6" y="0.6" width="114.8" height="94.8" stroke="#8fbbe8" stroke-width="1.2"/><rect x="6.00" y="8.15" width="11.2" height="2.9" rx="0.4" fill="#fff"/><rect x="29.20" y="8.15" width="11.2" height="2.9" rx="0.4" fill="#fff"/><rect x="52.40" y="8.15" width="11.2" height="2.9" rx="0.4" fill="#fff"/><rect x="75.60" y="8.15" width="11.2" height="2.9" rx="0.4" fill="#fff"/><rect x="98.80" y="8.15" width="11.2" height="2.9" rx="0.4" fill="#fff"/><rect x="6.00" y="27.35" width="11.2" height="2.9" rx="0.4" fill="#111"/><rect x="29.20" y="27.35" width="11.2" height="2.9" rx="0.4" fill="#111"/><rect x="52.40" y="27.35" width="11.2" height="2.9" rx="0.4" fill="#111"/><rect x="75.60" y="27.35" width="11.2" height="2.9" rx="0.4" fill="#111"/><rect x="98.80" y="27.35" width="11.2" height="2.9" rx="0.4" fill="#111"/><rect x="6.00" y="46.55" width="11.2" height="2.9" rx="0.4" fill="#111"/><rect x="29.20" y="46.55" width="11.2" height="2.9" rx="0.4" fill="#111"/><rect x="52.40" y="46.55" width="11.2" height="2.9" rx="0.4" fill="#111"/><rect x="75.60" y="46.55" width="11.2" height="2.9" rx="0.4" fill="#111"/><rect x="98.80" y="46.55" width="11.2" height="2.9" rx="0.4" fill="#111"/><rect x="6.00" y="65.75" width="11.2" height="2.9" rx="0.4" fill="#111"/><rect x="29.20" y="65.75" width="11.2" height="2.9" rx="0.4" fill="#111"/><rect x="52.40" y="65.75" width="11.2" height="2.9" rx="0.4" fill="#111"/><rect x="75.60" y="65.75" width="11.2" height="2.9" rx="0.4" fill="#111"/><rect x="98.80" y="65.75" width="11.2" height="2.9" rx="0.4" fill="#111"/><rect x="6.00" y="84.95" width="11.2" height="2.9" rx="0.4" fill="#111"/><rect x="29.20" y="84.95" width="11.2" height="2.9" rx="0.4" fill="#111"/><rect x="52.40" y="84.95" width="11.2" height="2.9" rx="0.4" fill="#111"/><rect x="75.60" y="84.95" width="11.2" height="2.9" rx="0.4" fill="#111"/><rect x="98.80" y="84.95" width="11.2" height="2.9" rx="0.4" fill="#111"/></svg>
<svg style="position:absolute;left:2302px;top:1224px;" width="116" height="96" viewBox="0 0 116 96" fill="none"><rect x="0.00" y="0.00" width="116.00" height="19.20" fill="#5296d6"/><rect x="0.00" y="19.20" width="116.00" height="19.20" fill="#b9d5ef"/><rect x="0.00" y="38.40" width="116.00" height="19.20" fill="#dbe8f6"/><rect x="0.00" y="57.60" width="116.00" height="19.20" fill="#b9d5ef"/><rect x="0.00" y="76.80" width="116.00" height="19.20" fill="#dbe8f6"/><path d="M23.20 0 V96" stroke="#eef5fc" stroke-width="1.6"/><path d="M0 19.20 H116" stroke="#eef5fc" stroke-width="1.6"/><path d="M46.40 0 V96" stroke="#eef5fc" stroke-width="1.6"/><path d="M0 38.40 H116" stroke="#eef5fc" stroke-width="1.6"/><path d="M69.60 0 V96" stroke="#eef5fc" stroke-width="1.6"/><path d="M0 57.60 H116" stroke="#eef5fc" stroke-width="1.6"/><path d="M92.80 0 V96" stroke="#eef5fc" stroke-width="1.6"/><path d="M0 76.80 H116" stroke="#eef5fc" stroke-width="1.6"/><rect x="114.4" y="0" width="1.6" height="96" fill="#fff"/><rect x="6.00" y="8.15" width="11.2" height="2.9" rx="0.4" fill="#fff"/><rect x="29.20" y="8.15" width="11.2" height="2.9" rx="0.4" fill="#fff"/><rect x="52.40" y="8.15" width="11.2" height="2.9" rx="0.4" fill="#fff"/><rect x="75.60" y="8.15" width="11.2" height="2.9" rx="0.4" fill="#fff"/><rect x="98.80" y="8.15" width="11.2" height="2.9" rx="0.4" fill="#fff"/><rect x="6.00" y="27.35" width="11.2" height="2.9" rx="0.4" fill="#111"/><rect x="29.20" y="27.35" width="11.2" height="2.9" rx="0.4" fill="#111"/><rect x="52.40" y="27.35" width="11.2" height="2.9" rx="0.4" fill="#111"/><rect x="75.60" y="27.35" width="11.2" height="2.9" rx="0.4" fill="#111"/><rect x="98.80" y="27.35" width="11.2" height="2.9" rx="0.4" fill="#111"/><rect x="6.00" y="46.55" width="11.2" height="2.9" rx="0.4" fill="#111"/><rect x="29.20" y="46.55" width="11.2" height="2.9" rx="0.4" fill="#111"/><rect x="52.40" y="46.55" width="11.2" height="2.9" rx="0.4" fill="#111"/><rect x="75.60" y="46.55" width="11.2" height="2.9" rx="0.4" fill="#111"/><rect x="98.80" y="46.55" width="11.2" height="2.9" rx="0.4" fill="#111"/><rect x="6.00" y="65.75" width="11.2" height="2.9" rx="0.4" fill="#111"/><rect x="29.20" y="65.75" width="11.2" height="2.9" rx="0.4" fill="#111"/><rect x="52.40" y="65.75" width="11.2" height="2.9" rx="0.4" fill="#111"/><rect x="75.60" y="65.75" width="11.2" height="2.9" rx="0.4" fill="#111"/><rect x="98.80" y="65.75" width="11.2" height="2.9" rx="0.4" fill="#111"/><rect x="6.00" y="84.95" width="11.2" height="2.9" rx="0.4" fill="#111"/><rect x="29.20" y="84.95" width="11.2" height="2.9" rx="0.4" fill="#111"/><rect x="52.40" y="84.95" width="11.2" height="2.9" rx="0.4" fill="#111"/><rect x="75.60" y="84.95" width="11.2" height="2.9" rx="0.4" fill="#111"/><rect x="98.80" y="84.95" width="11.2" height="2.9" rx="0.4" fill="#111"/></svg>
<svg style="position:absolute;left:2458px;top:1224px;" width="116" height="96" viewBox="0 0 116 96" fill="none"><rect x="0.00" y="0.00" width="116.00" height="19.20" fill="#5296d6"/><rect x="0.00" y="19.20" width="116.00" height="19.20" fill="#dbe8f6"/><rect x="0.00" y="57.60" width="116.00" height="19.20" fill="#dbe8f6"/><path d="M23.20 19.2 V96" stroke="#8fbbe8" stroke-width="1.2"/><path d="M46.40 19.2 V96" stroke="#8fbbe8" stroke-width="1.2"/><path d="M69.60 19.2 V96" stroke="#8fbbe8" stroke-width="1.2"/><path d="M92.80 19.2 V96" stroke="#8fbbe8" stroke-width="1.2"/><path d="M0 38.40 H116" stroke="#8fbbe8" stroke-width="1.2"/><path d="M0 57.60 H116" stroke="#8fbbe8" stroke-width="1.2"/><path d="M0 76.80 H116" stroke="#8fbbe8" stroke-width="1.2"/><rect x="1" y="1" width="114" height="94" stroke="#5296d6" stroke-width="2"/><rect x="0.00" y="92.60" width="116.00" height="3.40" fill="#5296d6"/><rect x="6.00" y="8.15" width="11.2" height="2.9" rx="0.4" fill="#fff"/><rect x="29.20" y="8.15" width="11.2" height="2.9" rx="0.4" fill="#fff"/><rect x="52.40" y="8.15" width="11.2" height="2.9" rx="0.4" fill="#fff"/><rect x="75.60" y="8.15" width="11.2" height="2.9" rx="0.4" fill="#fff"/><rect x="98.80" y="8.15" width="11.2" height="2.9" rx="0.4" fill="#fff"/><rect x="6.00" y="27.35" width="11.2" height="2.9" rx="0.4" fill="#111"/><rect x="29.20" y="27.35" width="11.2" height="2.9" rx="0.4" fill="#111"/><rect x="52.40" y="27.35" width="11.2" height="2.9" rx="0.4" fill="#111"/><rect x="75.60" y="27.35" width="11.2" height="2.9" rx="0.4" fill="#111"/><rect x="98.80" y="27.35" width="11.2" height="2.9" rx="0.4" fill="#111"/><rect x="6.00" y="46.55" width="11.2" height="2.9" rx="0.4" fill="#111"/><rect x="29.20" y="46.55" width="11.2" height="2.9" rx="0.4" fill="#111"/><rect x="52.40" y="46.55" width="11.2" height="2.9" rx="0.4" fill="#111"/><rect x="75.60" y="46.55" width="11.2" height="2.9" rx="0.4" fill="#111"/><rect x="98.80" y="46.55" width="11.2" height="2.9" rx="0.4" fill="#111"/><rect x="6.00" y="65.75" width="11.2" height="2.9" rx="0.4" fill="#111"/><rect x="29.20" y="65.75" width="11.2" height="2.9" rx="0.4" fill="#111"/><rect x="52.40" y="65.75" width="11.2" height="2.9" rx="0.4" fill="#111"/><rect x="75.60" y="65.75" width="11.2" height="2.9" rx="0.4" fill="#111"/><rect x="98.80" y="65.75" width="11.2" height="2.9" rx="0.4" fill="#111"/><rect x="6.00" y="84.95" width="11.2" height="2.9" rx="0.4" fill="#111"/><rect x="29.20" y="84.95" width="11.2" height="2.9" rx="0.4" fill="#111"/><rect x="52.40" y="84.95" width="11.2" height="2.9" rx="0.4" fill="#111"/><rect x="75.60" y="84.95" width="11.2" height="2.9" rx="0.4" fill="#111"/><rect x="98.80" y="84.95" width="11.2" height="2.9" rx="0.4" fill="#111"/></svg>
<svg style="position:absolute;left:2614px;top:1224px;" width="116" height="96" viewBox="0 0 116 96" fill="none"><rect x="0.00" y="0.00" width="116.00" height="96.00" fill="#dbe8f6"/><rect x="0.00" y="19.20" width="116.00" height="19.20" fill="#b9d5ef"/><rect x="0.00" y="57.60" width="116.00" height="19.20" fill="#b9d5ef"/><path d="M23.20 0 V96" stroke="#a6c9ec" stroke-width="1.2"/><path d="M0 19.20 H116" stroke="#a6c9ec" stroke-width="0.8"/><path d="M46.40 0 V96" stroke="#a6c9ec" stroke-width="1.2"/><path d="M0 38.40 H116" stroke="#a6c9ec" stroke-width="0.8"/><path d="M69.60 0 V96" stroke="#a6c9ec" stroke-width="1.2"/><path d="M0 57.60 H116" stroke="#a6c9ec" stroke-width="0.8"/><path d="M92.80 0 V96" stroke="#a6c9ec" stroke-width="1.2"/><path d="M0 76.80 H116" stroke="#a6c9ec" stroke-width="0.8"/><rect x="0.7" y="0.7" width="114.6" height="94.6" stroke="#8fbbe8" stroke-width="1.4"/><rect x="6.00" y="8.15" width="11.2" height="2.9" rx="0.4" fill="#111"/><rect x="29.20" y="8.15" width="11.2" height="2.9" rx="0.4" fill="#111"/><rect x="52.40" y="8.15" width="11.2" height="2.9" rx="0.4" fill="#111"/><rect x="75.60" y="8.15" width="11.2" height="2.9" rx="0.4" fill="#111"/><rect x="98.80" y="8.15" width="11.2" height="2.9" rx="0.4" fill="#111"/><rect x="6.00" y="27.35" width="11.2" height="2.9" rx="0.4" fill="#111"/><rect x="29.20" y="27.35" width="11.2" height="2.9" rx="0.4" fill="#111"/><rect x="52.40" y="27.35" width="11.2" height="2.9" rx="0.4" fill="#111"/><rect x="75.60" y="27.35" width="11.2" height="2.9" rx="0.4" fill="#111"/><rect x="98.80" y="27.35" width="11.2" height="2.9" rx="0.4" fill="#111"/><rect x="6.00" y="46.55" width="11.2" height="2.9" rx="0.4" fill="#111"/><rect x="29.20" y="46.55" width="11.2" height="2.9" rx="0.4" fill="#111"/><rect x="52.40" y="46.55" width="11.2" height="2.9" rx="0.4" fill="#111"/><rect x="75.60" y="46.55" width="11.2" height="2.9" rx="0.4" fill="#111"/><rect x="98.80" y="46.55" width="11.2" height="2.9" rx="0.4" fill="#111"/><rect x="6.00" y="65.75" width="11.2" height="2.9" rx="0.4" fill="#111"/><rect x="29.20" y="65.75" width="11.2" height="2.9" rx="0.4" fill="#111"/><rect x="52.40" y="65.75" width="11.2" height="2.9" rx="0.4" fill="#111"/><rect x="75.60" y="65.75" width="11.2" height="2.9" rx="0.4" fill="#111"/><rect x="98.80" y="65.75" width="11.2" height="2.9" rx="0.4" fill="#111"/><rect x="6.00" y="84.95" width="11.2" height="2.9" rx="0.4" fill="#111"/><rect x="29.20" y="84.95" width="11.2" height="2.9" rx="0.4" fill="#111"/><rect x="52.40" y="84.95" width="11.2" height="2.9" rx="0.4" fill="#111"/><rect x="75.60" y="84.95" width="11.2" height="2.9" rx="0.4" fill="#111"/><rect x="98.80" y="84.95" width="11.2" height="2.9" rx="0.4" fill="#111"/></svg>
<svg style="position:absolute;left:2146px;top:1344px;" width="116" height="96" viewBox="0 0 116 96" fill="none"><rect x="0.00" y="0.00" width="116.00" height="19.20" fill="#5296d6"/><rect x="0.00" y="19.20" width="116.00" height="19.20" fill="#d9d9d9"/><rect x="0.00" y="57.60" width="116.00" height="19.20" fill="#d9d9d9"/><path d="M23.20 19.2 V96" stroke="#e0f7d8" stroke-width="0.8"/><path d="M46.40 19.2 V96" stroke="#e0f7d8" stroke-width="0.8"/><path d="M69.60 19.2 V96" stroke="#e0f7d8" stroke-width="0.8"/><path d="M92.80 19.2 V96" stroke="#e0f7d8" stroke-width="0.8"/><rect x="0.00" y="0.00" width="116.00" height="2.60" fill="#000"/><rect x="0.00" y="18.20" width="116.00" height="1.60" fill="#000"/><rect x="0.00" y="93.00" width="116.00" height="3.00" fill="#000"/><rect x="6.00" y="8.15" width="11.2" height="2.9" rx="0.4" fill="#fff"/><rect x="29.20" y="8.15" width="11.2" height="2.9" rx="0.4" fill="#fff"/><rect x="52.40" y="8.15" width="11.2" height="2.9" rx="0.4" fill="#fff"/><rect x="75.60" y="8.15" width="11.2" height="2.9" rx="0.4" fill="#fff"/><rect x="98.80" y="8.15" width="11.2" height="2.9" rx="0.4" fill="#fff"/><rect x="6.00" y="27.35" width="11.2" height="2.9" rx="0.4" fill="#111"/><rect x="29.20" y="27.35" width="11.2" height="2.9" rx="0.4" fill="#111"/><rect x="52.40" y="27.35" width="11.2" height="2.9" rx="0.4" fill="#111"/><rect x="75.60" y="27.35" width="11.2" height="2.9" rx="0.4" fill="#111"/><rect x="98.80" y="27.35" width="11.2" height="2.9" rx="0.4" fill="#111"/><rect x="6.00" y="46.55" width="11.2" height="2.9" rx="0.4" fill="#111"/><rect x="29.20" y="46.55" width="11.2" height="2.9" rx="0.4" fill="#111"/><rect x="52.40" y="46.55" width="11.2" height="2.9" rx="0.4" fill="#111"/><rect x="75.60" y="46.55" width="11.2" height="2.9" rx="0.4" fill="#111"/><rect x="98.80" y="46.55" width="11.2" height="2.9" rx="0.4" fill="#111"/><rect x="6.00" y="65.75" width="11.2" height="2.9" rx="0.4" fill="#111"/><rect x="29.20" y="65.75" width="11.2" height="2.9" rx="0.4" fill="#111"/><rect x="52.40" y="65.75" width="11.2" height="2.9" rx="0.4" fill="#111"/><rect x="75.60" y="65.75" width="11.2" height="2.9" rx="0.4" fill="#111"/><rect x="98.80" y="65.75" width="11.2" height="2.9" rx="0.4" fill="#111"/><rect x="6.00" y="84.95" width="11.2" height="2.9" rx="0.4" fill="#111"/><rect x="29.20" y="84.95" width="11.2" height="2.9" rx="0.4" fill="#111"/><rect x="52.40" y="84.95" width="11.2" height="2.9" rx="0.4" fill="#111"/><rect x="75.60" y="84.95" width="11.2" height="2.9" rx="0.4" fill="#111"/><rect x="98.80" y="84.95" width="11.2" height="2.9" rx="0.4" fill="#111"/></svg>
<svg style="position:absolute;left:2302px;top:1344px;" width="116" height="96" viewBox="0 0 116 96" fill="none"><rect x="0.00" y="0.00" width="116.00" height="19.20" fill="#000"/><rect x="0.00" y="19.20" width="116.00" height="19.20" fill="#3d6fa6"/><rect x="0.00" y="38.40" width="116.00" height="19.20" fill="#5296d6"/><rect x="0.00" y="57.60" width="116.00" height="19.20" fill="#3d6fa6"/><rect x="0.00" y="76.80" width="116.00" height="19.20" fill="#5296d6"/><path d="M0 19.20 H116" stroke="#fff" stroke-width="1.6"/><path d="M23.20 0 V96" stroke="#4aa56a" stroke-width="0.7"/><path d="M46.40 0 V96" stroke="#4aa56a" stroke-width="0.7"/><path d="M69.60 0 V96" stroke="#4aa56a" stroke-width="0.7"/><path d="M92.80 0 V96" stroke="#4aa56a" stroke-width="0.7"/><rect x="6.00" y="8.15" width="11.2" height="2.9" rx="0.4" fill="#fff"/><rect x="29.20" y="8.15" width="11.2" height="2.9" rx="0.4" fill="#fff"/><rect x="52.40" y="8.15" width="11.2" height="2.9" rx="0.4" fill="#fff"/><rect x="75.60" y="8.15" width="11.2" height="2.9" rx="0.4" fill="#fff"/><rect x="98.80" y="8.15" width="11.2" height="2.9" rx="0.4" fill="#fff"/><rect x="6.00" y="27.35" width="11.2" height="2.9" rx="0.4" fill="#fff"/><rect x="29.20" y="27.35" width="11.2" height="2.9" rx="0.4" fill="#fff"/><rect x="52.40" y="27.35" width="11.2" height="2.9" rx="0.4" fill="#fff"/><rect x="75.60" y="27.35" width="11.2" height="2.9" rx="0.4" fill="#fff"/><rect x="98.80" y="27.35" width="11.2" height="2.9" rx="0.4" fill="#fff"/><rect x="6.00" y="46.55" width="11.2" height="2.9" rx="0.4" fill="#fff"/><rect x="29.20" y="46.55" width="11.2" height="2.9" rx="0.4" fill="#fff"/><rect x="52.40" y="46.55" width="11.2" height="2.9" rx="0.4" fill="#fff"/><rect x="75.60" y="46.55" width="11.2" height="2.9" rx="0.4" fill="#fff"/><rect x="98.80" y="46.55" width="11.2" height="2.9" rx="0.4" fill="#fff"/><rect x="6.00" y="65.75" width="11.2" height="2.9" rx="0.4" fill="#fff"/><rect x="29.20" y="65.75" width="11.2" height="2.9" rx="0.4" fill="#fff"/><rect x="52.40" y="65.75" width="11.2" height="2.9" rx="0.4" fill="#fff"/><rect x="75.60" y="65.75" width="11.2" height="2.9" rx="0.4" fill="#fff"/><rect x="98.80" y="65.75" width="11.2" height="2.9" rx="0.4" fill="#fff"/><rect x="6.00" y="84.95" width="11.2" height="2.9" rx="0.4" fill="#fff"/><rect x="29.20" y="84.95" width="11.2" height="2.9" rx="0.4" fill="#fff"/><rect x="52.40" y="84.95" width="11.2" height="2.9" rx="0.4" fill="#fff"/><rect x="75.60" y="84.95" width="11.2" height="2.9" rx="0.4" fill="#fff"/><rect x="98.80" y="84.95" width="11.2" height="2.9" rx="0.4" fill="#fff"/></svg>
<div style="position:absolute;left:2123.1px;top:996.2px;width:626.1px;height:493.1px;box-sizing:border-box;border:5.9px solid #d03a22;"></div>
<div style="position:absolute;left:2138px;top:1492px;width:600px;height:2px;background:#ececec;"></div>
<div style="position:absolute;left:2138px;top:1525.6px;width:600px;height:40.4px;box-sizing:border-box;background:#fff;border-radius:11px;border:1px solid #e2e2e2;box-shadow:0 1px 2px rgba(0,0,0,0.16);"></div>
<div class="t" style="top:1531.79px;font-size:26px;color:#222;left:2238.73px;transform:scaleX(1.0180);transform-origin:left center;-webkit-text-stroke:0.25px #222;">Remove Table and Keep Formats</div>
<div style="position:absolute;left:2138px;top:1589.8px;width:600px;height:40.4px;box-sizing:border-box;background:#fff;border-radius:11px;border:1px solid #e2e2e2;box-shadow:0 1px 2px rgba(0,0,0,0.16);"></div>
<div class="t" style="top:1595.79px;font-size:26px;color:#222;left:2273.33px;transform:scaleX(1.0167);transform-origin:left center;-webkit-text-stroke:0.25px #222;">Remove Table and Formats</div>
<div style="position:absolute;left:2761px;top:350px;width:119px;height:1340px;background:#f4f4f4;"></div>
<div style="position:absolute;left:2761px;top:350px;width:119px;height:51px;background:#fff;"></div>
<div style="position:absolute;left:2761px;top:400.8px;width:119px;height:1.5px;background:#d0d0d0;"></div>
<div style="position:absolute;left:2760px;top:350px;width:2px;height:170px;background:#dedede;"></div>
<div style="position:absolute;left:2760px;top:520px;width:120px;height:83.4px;background:#fafafa;"></div>
<div style="position:absolute;left:2762px;top:519px;width:118px;height:1.1px;background:#c6c6c6;"></div>
<div style="position:absolute;left:2762px;top:520.1px;width:118px;height:1px;background:#fefefe;"></div>
<div style="position:absolute;left:2874px;top:519.8px;width:6px;height:83.6px;background:#449752;"></div>
<div style="position:absolute;left:2762px;top:602px;width:118px;height:1px;background:#fefefe;"></div>
<div style="position:absolute;left:2762px;top:603px;width:118px;height:1.1px;background:#c6c6c6;"></div>
<div style="position:absolute;left:2760px;top:603px;width:2px;height:1087px;background:#dedede;"></div>
<svg style="position:absolute;left:2794px;top:362px;" width="40" height="36" viewBox="0 0 40 36" fill="none"><path d="M10.3 26.8 H6.4 Q4.1 26.8 4.1 24.5 V6.3 Q4.1 4 6.4 4 H23.3 Q25.6 4 25.6 6.3 V17" stroke="#404040" stroke-width="2.1" stroke-linecap="round"/><path d="M9.8 11.1 H20.3 M9.8 17 H17.2" stroke="#404040" stroke-width="2.1" stroke-linecap="round"/><path d="M12.9 26.3 Q22.7 14.5 32.7 26.3 Q22.7 37.7 12.9 26.3 Z" fill="#fff" stroke="#404040" stroke-width="2" stroke-linejoin="round"/><circle cx="22.7" cy="26.3" r="2.5" stroke="#404040" stroke-width="1.8"/></svg>
<svg style="position:absolute;left:2837.6px;top:374.6px;" width="16.6" height="10.2" viewBox="0 0 16.6 10.2" fill="none"><path d="M2 2 L8.3 8.2 L14.6 2" stroke="#6a6a6a" stroke-width="1.7" stroke-linecap="round" stroke-linejoin="round"/></svg>
<svg style="position:absolute;left:2800.2px;top:423.9px;" width="41.40" height="39.10" viewBox="0 0 36 34" fill="none"><path d="M21.2 5.9 C21 3.6 17.4 3.2 15.9 6.6 C14.5 9.8 13.5 16.4 11.7 23.2 C10.5 27.6 8.8 29.4 5.9 28.3" stroke="#404040" stroke-width="3.25" stroke-linecap="round"/><circle cx="20.9" cy="5.7" r="1.9500000000000002" fill="#404040"/><circle cx="6" cy="28.1" r="1.9500000000000002" fill="#404040"/><path d="M10.4 12.4 H18.4" stroke="#404040" stroke-width="2.21" stroke-linecap="round"/><path d="M18.6 11.4 C21.4 10.4 22.6 13 23.6 16.6 C24.6 20.2 25.4 23.2 27.2 22.9 C28.6 22.7 29.8 21.4 30.8 19.8" stroke="#404040" stroke-width="3.25" stroke-linecap="round"/><path d="M30 11.6 C27.6 11.2 25.8 13.8 23.6 16.8 C21.4 19.8 19.8 22.2 17.8 21.6" stroke="#404040" stroke-width="1.9500000000000002" stroke-linecap="round"/><circle cx="30.2" cy="11.7" r="1.885" fill="#404040"/><circle cx="17.7" cy="21.5" r="1.885" fill="#404040"/></svg>
<div class="t" style="top:476.36px;font-size:20.6px;color:#3c3c3c;left:2778.50px;transform:scaleX(1.0673);transform-origin:left center;">Function</div>
<svg style="position:absolute;left:2802px;top:541px;" width="38" height="38" viewBox="0 0 38 38" fill="none"><rect x="3.6" y="3.6" width="30" height="30" rx="2.4" stroke="#3f9a4f" stroke-width="2.4"/><path d="M3.6 12.2 H33.6 M3.6 19.4 H33.6 M3.6 26.6 H33.6 M18.6 12.2 V33.6" stroke="#3f9a4f" stroke-width="2.2"/></svg>

</div>
</body></html>
